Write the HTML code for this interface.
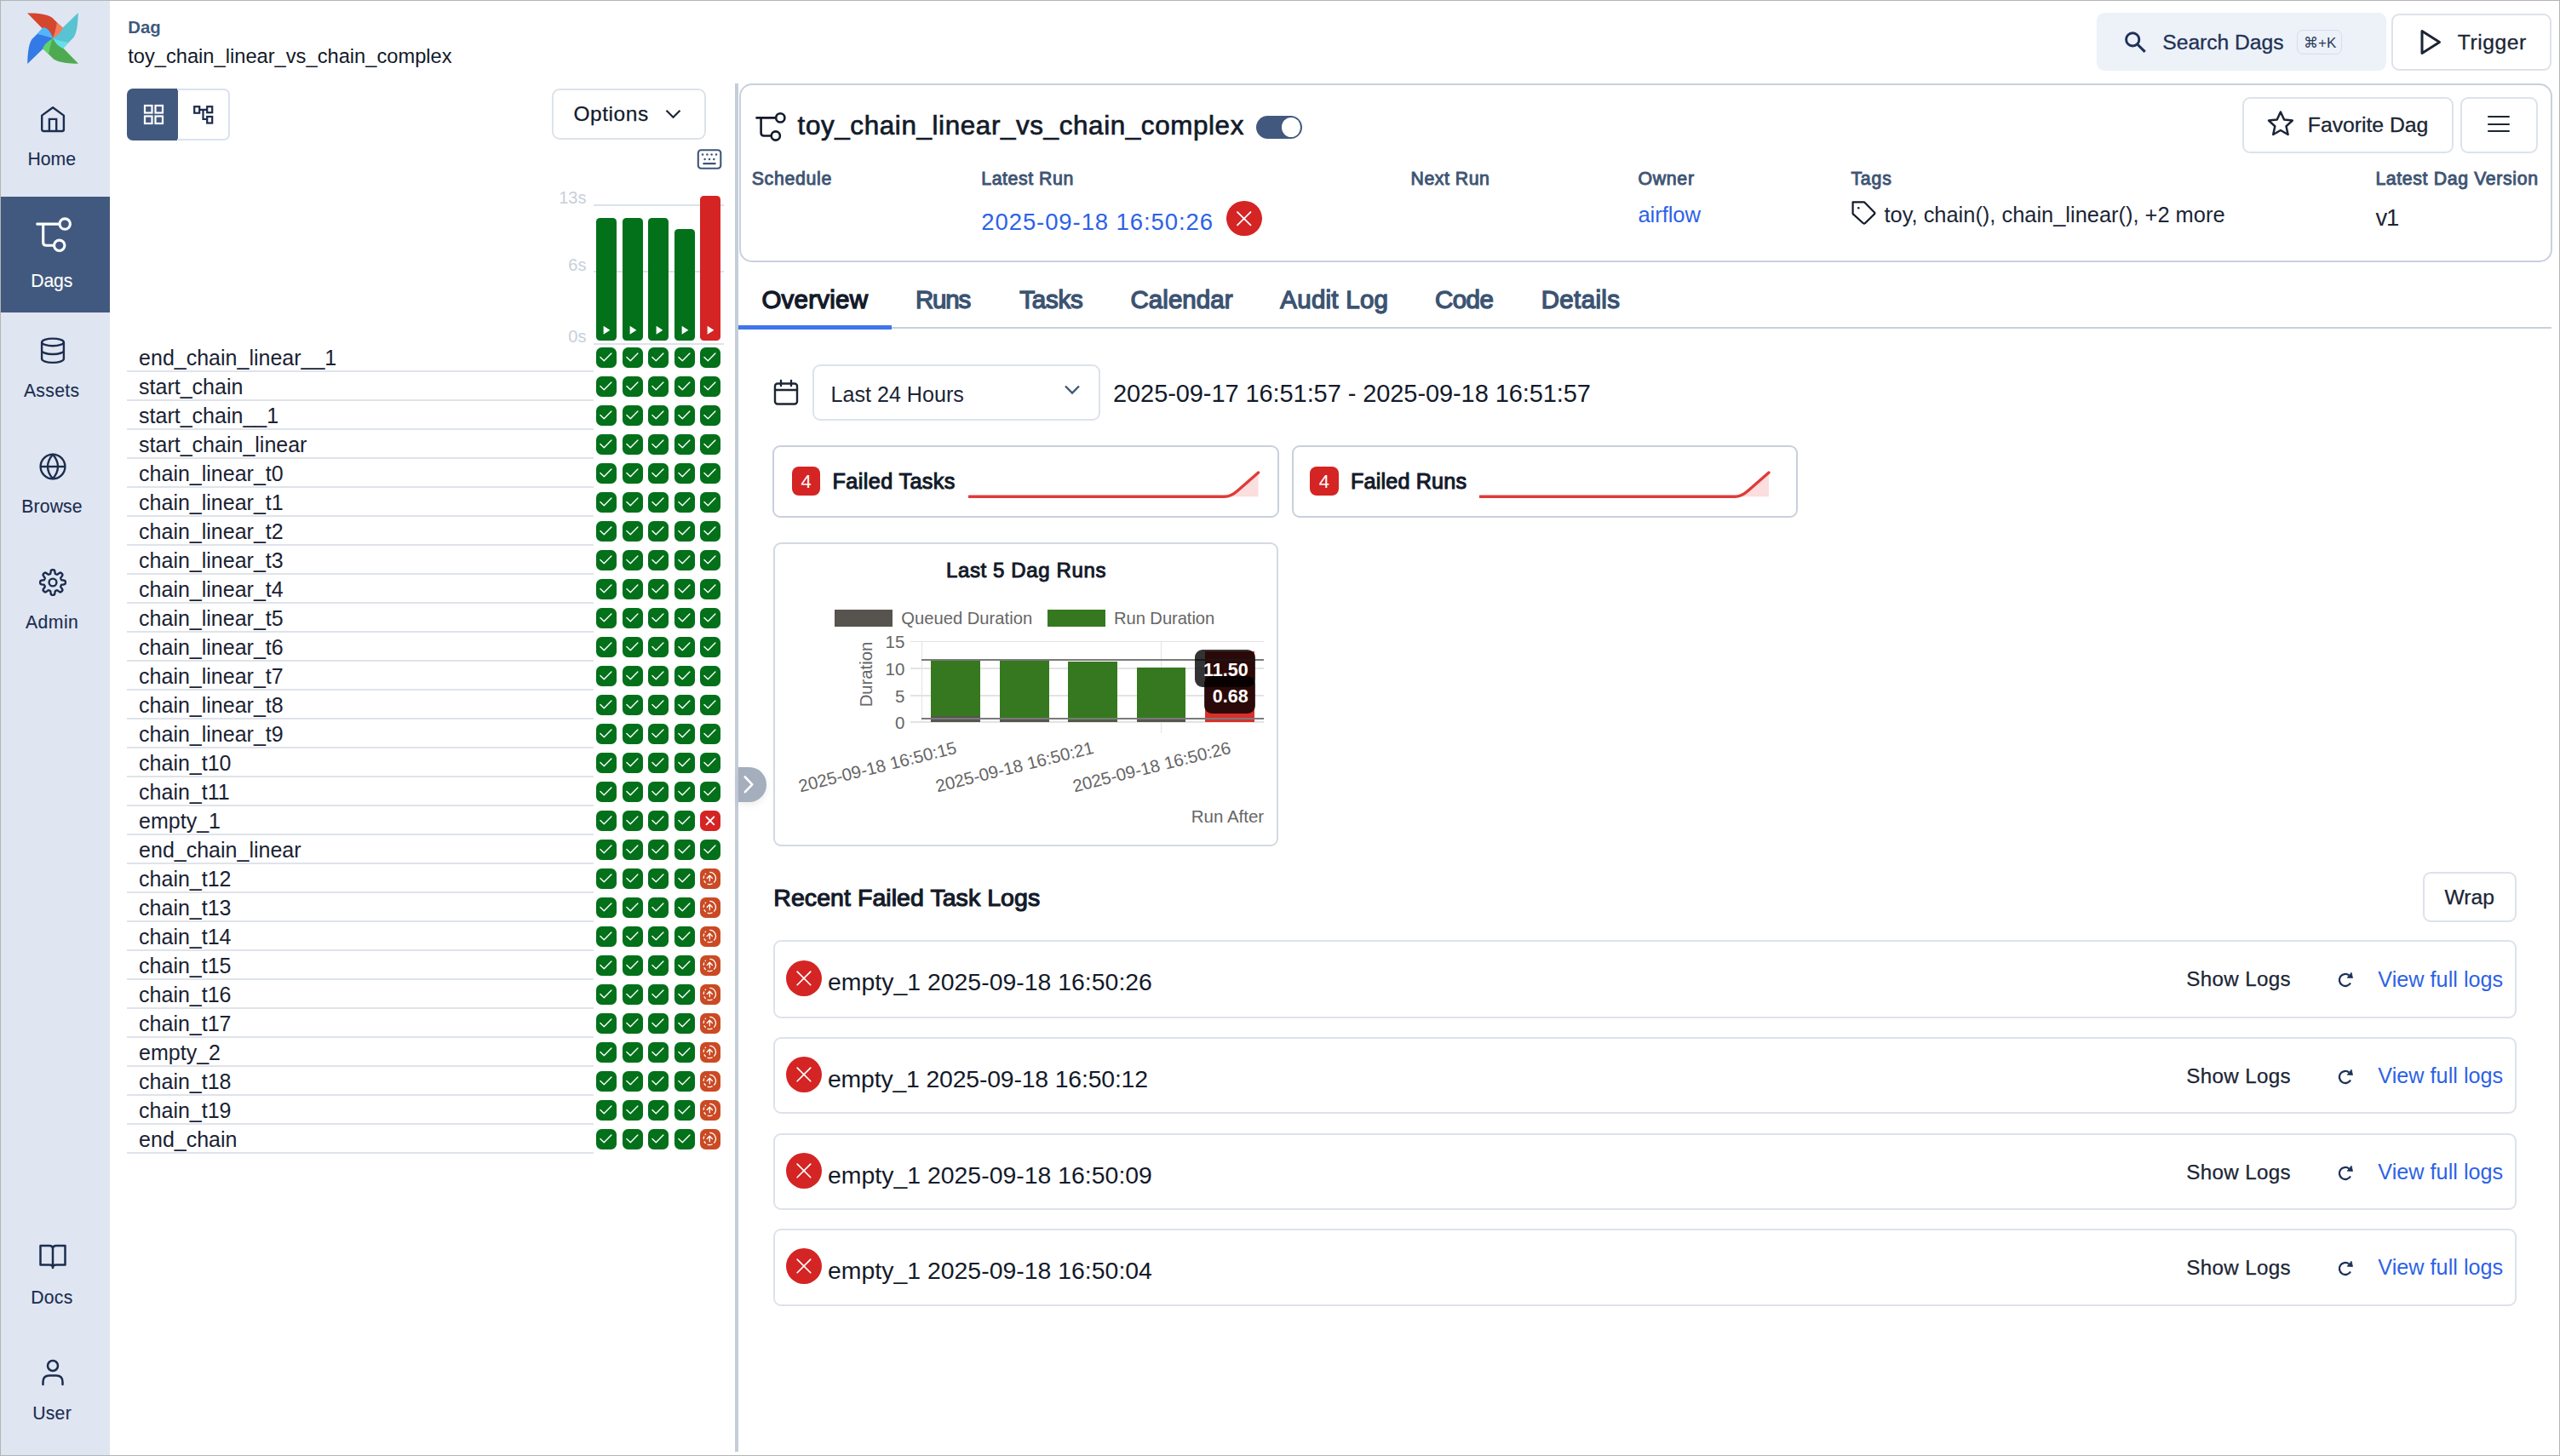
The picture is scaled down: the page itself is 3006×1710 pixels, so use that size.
<!DOCTYPE html>
<html><head><meta charset="utf-8"><style>
html,body{margin:0;padding:0;background:#fff;}
#root{position:relative;width:3006px;height:1710px;overflow:hidden;background:#ffffff;font-family:"Liberation Sans",sans-serif;}
.t{position:absolute;white-space:pre;font-family:"Liberation Sans",sans-serif;}
.b{position:absolute;}
</style></head><body><div id="root">
<div class="b" style="left:1.00px;top:1.00px;width:128.00px;height:1708.00px;background:#dfe6f2;"></div>
<svg class="b" style="left:31.50px;top:15.00px;width:60.00px;height:60.50px;" viewBox="0 0 60.0 60.5"><g transform="translate(30.0,30.0) rotate(0)"><path d="M0,0 C-3,-5 -6.5,-10 -13,-12.2 L-30,-29.8 C-20,-29.5 -8,-29 -1,-24.5 C2,-21.5 4,-19.5 5,-18.5 L12.6,-11.5 C13.2,-9.5 11,-6 8,-3.8 C5,-1.7 2,-0.3 0,0 Z" fill="#d4472d"/><path d="M0,0 C2,-0.3 5,-1.7 8,-3.8 C11,-6 13.2,-9.5 12.6,-11.5 L5,-18.5 C3.5,-12 2.5,-6 0,0 Z" fill="#f07f5f"/></g><g transform="translate(30.0,30.0) rotate(90)"><path d="M0,0 C-3,-5 -6.5,-10 -13,-12.2 L-30,-29.8 C-20,-29.5 -8,-29 -1,-24.5 C2,-21.5 4,-19.5 5,-18.5 L12.6,-11.5 C13.2,-9.5 11,-6 8,-3.8 C5,-1.7 2,-0.3 0,0 Z" fill="#58c3d1"/><path d="M0,0 C2,-0.3 5,-1.7 8,-3.8 C11,-6 13.2,-9.5 12.6,-11.5 L5,-18.5 C3.5,-12 2.5,-6 0,0 Z" fill="#66dfea"/></g><g transform="translate(30.0,30.0) rotate(180)"><path d="M0,0 C-3,-5 -6.5,-10 -13,-12.2 L-30,-29.8 C-20,-29.5 -8,-29 -1,-24.5 C2,-21.5 4,-19.5 5,-18.5 L12.6,-11.5 C13.2,-9.5 11,-6 8,-3.8 C5,-1.7 2,-0.3 0,0 Z" fill="#4eaa51"/><path d="M0,0 C2,-0.3 5,-1.7 8,-3.8 C11,-6 13.2,-9.5 12.6,-11.5 L5,-18.5 C3.5,-12 2.5,-6 0,0 Z" fill="#62d36b"/></g><g transform="translate(30.0,30.0) rotate(270)"><path d="M0,0 C-3,-5 -6.5,-10 -13,-12.2 L-30,-29.8 C-20,-29.5 -8,-29 -1,-24.5 C2,-21.5 4,-19.5 5,-18.5 L12.6,-11.5 C13.2,-9.5 11,-6 8,-3.8 C5,-1.7 2,-0.3 0,0 Z" fill="#347ae6"/><path d="M0,0 C2,-0.3 5,-1.7 8,-3.8 C11,-6 13.2,-9.5 12.6,-11.5 L5,-18.5 C3.5,-12 2.5,-6 0,0 Z" fill="#53b5f7"/></g></svg>
<svg class="b" style="left:44.00px;top:122.00px;width:36.00px;height:36.00px;" viewBox="0 0 36 36"><path d="M5.2,13.6 L18.05,4.3 L30.9,13.6 L30.9,30 Q30.9,32 28.9,32 L7.2,32 Q5.2,32 5.2,30 Z" fill="none" stroke="#1c2d4f" stroke-width="2.4" stroke-linejoin="round"/><path d="M13.9,32 L13.9,17.9 L22.2,17.9 L22.2,32" fill="none" stroke="#1c2d4f" stroke-width="2.4"/></svg>
<div id="t1" class="t" style="letter-spacing:0.023px;left:32.40px;top:176.38px;font-size:21.2px;line-height:21.2px;color:#1c2d4f;-webkit-text-stroke:0.12px #1c2d4f;">Home</div>
<div class="b" style="left:1.00px;top:231.00px;width:128.00px;height:136.00px;background:#42597f;"></div>
<svg class="b" style="left:41.00px;top:253.50px;width:44.00px;height:43.50px;" viewBox="0 0 44 43.5"><path d="M2.7,9.1 L28,9.1 M9.7,9.1 L9.7,30.8 Q9.7,34.3 13.2,34.3 L22.5,34.3" fill="none" stroke="#ffffff" stroke-width="3.1" stroke-linecap="round"/><circle cx="35.2" cy="9.1" r="6.2" fill="none" stroke="#ffffff" stroke-width="3.1"/><circle cx="28.7" cy="34.3" r="6.2" fill="none" stroke="#ffffff" stroke-width="3.1"/></svg>
<div id="t2" class="t" style="letter-spacing:-0.156px;left:36.30px;top:318.58px;font-size:21.2px;line-height:21.2px;color:#ffffff;-webkit-text-stroke:0.12px #ffffff;">Dags</div>
<svg class="b" style="left:44.00px;top:394.00px;width:36.00px;height:36.00px;" viewBox="0 0 36 36"><ellipse cx="18" cy="7.9" rx="12.9" ry="4.3" fill="none" stroke="#1c2d4f" stroke-width="2.4"/><path d="M5.1,7.9 L5.1,27.6 A12.9,4.3 0 0 0 30.9,27.6 L30.9,7.9 M5.1,17.7 A12.9,4.3 0 0 0 30.9,17.7" fill="none" stroke="#1c2d4f" stroke-width="2.4"/></svg>
<div id="t3" class="t" style="letter-spacing:0.341px;left:27.90px;top:448.08px;font-size:21.2px;line-height:21.2px;color:#1c2d4f;-webkit-text-stroke:0.12px #1c2d4f;">Assets</div>
<svg class="b" style="left:44.00px;top:530.00px;width:36.00px;height:36.00px;" viewBox="0 0 36 36"><circle cx="18" cy="18" r="14.4" fill="none" stroke="#1c2d4f" stroke-width="2.4"/><path d="M18,3.8 C22.5,9 24,14 24,18 C24,22 22.5,27 18,32.2 C13.5,27 12,22 12,18 C12,14 13.5,9 18,3.8 Z" fill="none" stroke="#1c2d4f" stroke-width="2.4" stroke-linejoin="round"/><path d="M3.6,18 L32.4,18" stroke="#1c2d4f" stroke-width="2.4"/></svg>
<div id="t4" class="t" style="letter-spacing:0.129px;left:25.30px;top:583.78px;font-size:21.2px;line-height:21.2px;color:#1c2d4f;-webkit-text-stroke:0.12px #1c2d4f;">Browse</div>
<svg class="b" style="left:44.00px;top:665.70px;width:36.00px;height:36.00px;" viewBox="0 0 36 36.0"><path d="M32.84,18.00 L32.82,18.58 L32.73,19.16 L32.48,19.71 L31.79,20.18 L30.36,20.46 L28.93,20.62 L28.22,20.88 L27.92,21.22 L27.73,21.59 L27.57,21.96 L27.42,22.34 L27.29,22.73 L27.27,23.19 L27.58,23.87 L28.48,25.00 L29.29,26.21 L29.45,27.03 L29.23,27.59 L28.89,28.07 L28.50,28.50 L28.07,28.89 L27.59,29.23 L27.03,29.45 L26.21,29.29 L25.00,28.48 L23.87,27.58 L23.19,27.27 L22.73,27.29 L22.34,27.42 L21.96,27.57 L21.59,27.73 L21.22,27.92 L20.88,28.22 L20.62,28.93 L20.46,30.36 L20.18,31.79 L19.71,32.48 L19.16,32.73 L18.58,32.82 L18.00,32.84 L17.42,32.82 L16.84,32.73 L16.29,32.48 L15.82,31.79 L15.54,30.36 L15.38,28.93 L15.12,28.22 L14.78,27.92 L14.41,27.73 L14.04,27.57 L13.66,27.42 L13.27,27.29 L12.81,27.27 L12.13,27.58 L11.00,28.48 L9.79,29.29 L8.97,29.45 L8.41,29.23 L7.93,28.89 L7.50,28.50 L7.11,28.07 L6.77,27.59 L6.55,27.03 L6.71,26.21 L7.52,25.00 L8.42,23.87 L8.73,23.19 L8.71,22.73 L8.58,22.34 L8.43,21.96 L8.27,21.59 L8.08,21.22 L7.78,20.88 L7.07,20.62 L5.64,20.46 L4.21,20.18 L3.52,19.71 L3.27,19.16 L3.18,18.58 L3.16,18.00 L3.18,17.42 L3.27,16.84 L3.52,16.29 L4.21,15.82 L5.64,15.54 L7.07,15.38 L7.78,15.12 L8.08,14.78 L8.27,14.41 L8.43,14.04 L8.58,13.66 L8.71,13.27 L8.73,12.81 L8.42,12.13 L7.52,11.00 L6.71,9.79 L6.55,8.97 L6.77,8.41 L7.11,7.93 L7.50,7.50 L7.93,7.11 L8.41,6.77 L8.97,6.55 L9.79,6.71 L11.00,7.52 L12.13,8.42 L12.81,8.73 L13.27,8.71 L13.66,8.58 L14.04,8.43 L14.41,8.27 L14.78,8.08 L15.12,7.78 L15.38,7.07 L15.54,5.64 L15.82,4.21 L16.29,3.52 L16.84,3.27 L17.42,3.18 L18.00,3.16 L18.58,3.18 L19.16,3.27 L19.71,3.52 L20.18,4.21 L20.46,5.64 L20.62,7.07 L20.88,7.78 L21.22,8.08 L21.59,8.27 L21.96,8.43 L22.34,8.58 L22.73,8.71 L23.19,8.73 L23.87,8.42 L25.00,7.52 L26.21,6.71 L27.03,6.55 L27.59,6.77 L28.07,7.11 L28.50,7.50 L28.89,7.93 L29.23,8.41 L29.45,8.97 L29.29,9.79 L28.48,11.00 L27.58,12.13 L27.27,12.81 L27.29,13.27 L27.42,13.66 L27.57,14.04 L27.73,14.41 L27.92,14.78 L28.22,15.12 L28.93,15.38 L30.36,15.54 L31.79,15.82 L32.48,16.29 L32.73,16.84 L32.82,17.42 Z" fill="none" stroke="#1c2d4f" stroke-width="2.4" stroke-linejoin="round"/><circle cx="18" cy="18" r="4.4" fill="none" stroke="#1c2d4f" stroke-width="2.4"/></svg>
<div id="t5" class="t" style="letter-spacing:0.459px;left:30.00px;top:719.98px;font-size:21.2px;line-height:21.2px;color:#1c2d4f;-webkit-text-stroke:0.12px #1c2d4f;">Admin</div>
<svg class="b" style="left:44.00px;top:1459.00px;width:36.00px;height:34.00px;" viewBox="0 0 36 34"><path d="M3.5,4 L14,4 Q18,4 18,8 L18,30 Q18,26.5 14,26.5 L3.5,26.5 Z M32.5,4 L22,4 Q18,4 18,8 L18,30 Q18,26.5 22,26.5 L32.5,26.5 Z" fill="none" stroke="#1c2d4f" stroke-width="2.5" stroke-linejoin="round"/></svg>
<div id="t6" class="t" style="letter-spacing:0.240px;left:36.30px;top:1513.18px;font-size:21.2px;line-height:21.2px;color:#1c2d4f;-webkit-text-stroke:0.12px #1c2d4f;">Docs</div>
<svg class="b" style="left:44.00px;top:1595.00px;width:36.00px;height:34.00px;" viewBox="0 0 36 34"><circle cx="18" cy="9" r="6" fill="none" stroke="#1c2d4f" stroke-width="2.5"/><path d="M6.5,31 L6.5,28 Q6.5,20.5 14,20.5 L22,20.5 Q29.5,20.5 29.5,28 L29.5,31" fill="none" stroke="#1c2d4f" stroke-width="2.5" stroke-linecap="round"/></svg>
<div id="t7" class="t" style="letter-spacing:0.255px;left:38.20px;top:1649.38px;font-size:21.2px;line-height:21.2px;color:#1c2d4f;-webkit-text-stroke:0.12px #1c2d4f;">User</div>
<div id="t8" class="t" style="letter-spacing:0.034px;left:150.20px;top:21.66px;font-size:20.4px;line-height:20.4px;color:#3f5a7e;font-weight:700;">Dag</div>
<div id="t9" class="t" style="letter-spacing:-0.005px;left:150.20px;top:54.61px;font-size:23.7px;line-height:23.7px;color:#131a2a;">toy_chain_linear_vs_chain_complex</div>
<div class="b" style="left:2462.30px;top:15.30px;width:339.40px;height:67.30px;background:#edf1f8;border-radius:9px;"></div>
<svg class="b" style="left:2493.00px;top:35.00px;width:29.00px;height:29.00px;" viewBox="0 0 29 29"><circle cx="11.2" cy="11.4" r="7.6" fill="none" stroke="#1e3257" stroke-width="2.9"/><path d="M16.8,17 L24.6,24.8" stroke="#1e3257" stroke-width="3.1" stroke-linecap="square"/></svg>
<div id="t10" class="t" style="letter-spacing:-0.052px;left:2539.30px;top:37.80px;font-size:24.7px;line-height:24.7px;color:#1e3257;-webkit-text-stroke:0.3px #1e3257;">Search Dags</div>
<div class="b" style="left:2697.30px;top:35.00px;width:52.70px;height:29.20px;border:1.5px solid #d5dded;border-radius:7px;box-sizing:border-box;"></div>
<div id="t11" class="t" style="left:2705.00px;top:41.55px;font-size:17px;line-height:17px;color:#2a3b5c;">⌘+K</div>
<div class="b" style="left:2808.00px;top:15.60px;width:188.00px;height:67.40px;border:2px solid #dde2ea;border-radius:9px;box-sizing:border-box;"></div>
<svg class="b" style="left:2840.00px;top:33.00px;width:28.00px;height:33.00px;" viewBox="0 0 28 33"><path d="M4,3.5 L24.5,16.5 L4,29.5 Z" fill="none" stroke="#1b2535" stroke-width="3" stroke-linejoin="round"/></svg>
<div id="t12" class="t" style="letter-spacing:0.536px;left:2885.80px;top:37.80px;font-size:24.7px;line-height:24.7px;color:#1b2535;-webkit-text-stroke:0.3px #1b2535;">Trigger</div>
<div class="b" style="left:149.10px;top:104.10px;width:59.90px;height:60.70px;background:#42597f;border-radius:7px 0 0 7px;"></div>
<div class="b" style="left:207.50px;top:104.10px;width:62.20px;height:60.70px;border:2px solid #d9e2f1;border-radius:0 7px 7px 0;box-sizing:border-box;border-left:none;"></div>
<svg class="b" style="left:167.00px;top:121.00px;width:27.00px;height:27.00px;" viewBox="0 0 27 27"><rect x="3" y="3" width="8.5" height="8.5" fill="none" stroke="#fff" stroke-width="2.2"/><rect x="3" y="15.5" width="8.5" height="8.5" fill="none" stroke="#fff" stroke-width="2.2"/><rect x="15.5" y="3" width="8.5" height="8.5" fill="none" stroke="#fff" stroke-width="2.2"/><rect x="15.5" y="15.5" width="8.5" height="8.5" fill="none" stroke="#fff" stroke-width="2.2"/></svg>
<svg class="b" style="left:225.00px;top:122.00px;width:27.00px;height:25.00px;" viewBox="0 0 27 25"><g fill="none" stroke="#1b2a4a" stroke-width="2.2"><rect x="3.2" y="3.2" width="6" height="7.5"/><rect x="18.2" y="3.2" width="6" height="7"/><rect x="18.2" y="15" width="6" height="7.5"/><path d="M9.2,6.8 L18.2,6.8 M13.5,6.8 L13.5,18 L18.2,18"/></g></svg>
<div class="b" style="left:647.60px;top:104.30px;width:181.00px;height:59.90px;border:2px solid #dde2ea;border-radius:9px;box-sizing:border-box;"></div>
<div id="t13" class="t" style="letter-spacing:0.544px;left:673.50px;top:122.27px;font-size:24.5px;line-height:24.5px;color:#131a2a;-webkit-text-stroke:0.25px #131a2a;">Options</div>
<svg class="b" style="left:780.00px;top:127.00px;width:21.00px;height:14.00px;" viewBox="0 0 21 14"><path d="M2.5,2.8 L10.5,10.8 L18.5,2.8" fill="none" stroke="#1b2535" stroke-width="2.2"/></svg>
<svg class="b" style="left:817.00px;top:173.00px;width:33.00px;height:28.00px;" viewBox="0 0 33 28"><rect x="2.8" y="3.2" width="26.5" height="21.5" rx="3.5" fill="none" stroke="#3d5577" stroke-width="2.1"/><circle cx="8" cy="8.5" r="1.25" fill="#3d5577"/><circle cx="13.4" cy="8.5" r="1.25" fill="#3d5577"/><circle cx="18.6" cy="8.5" r="1.25" fill="#3d5577"/><circle cx="24" cy="8.5" r="1.25" fill="#3d5577"/><circle cx="10.6" cy="13.9" r="1.25" fill="#3d5577"/><circle cx="16" cy="13.9" r="1.25" fill="#3d5577"/><circle cx="21.3" cy="13.9" r="1.25" fill="#3d5577"/><path d="M9.3,19.2 L22.7,19.2" stroke="#3d5577" stroke-width="2.2" stroke-linecap="round"/></svg>
<div id="t14" class="t" style="right:2317.60px;top:221.90px;font-size:20px;line-height:20px;color:#c7cfdb;">13s</div>
<div id="t15" class="t" style="right:2317.60px;top:300.50px;font-size:20px;line-height:20px;color:#c7cfdb;">6s</div>
<div id="t16" class="t" style="right:2317.60px;top:385.20px;font-size:20px;line-height:20px;color:#c7cfdb;">0s</div>
<div class="b" style="left:697.00px;top:240.00px;width:153.00px;height:2.00px;background:#dde2ea;"></div>
<div class="b" style="left:697.00px;top:318.00px;width:153.00px;height:2.00px;background:#dde2ea;"></div>
<div class="b" style="left:697.00px;top:403.00px;width:153.00px;height:2.00px;background:#dde2ea;"></div>
<div class="b" style="left:700.10px;top:255.90px;width:23.80px;height:143.70px;background:#03701a;border-radius:4.5px;"></div>
<svg class="b" style="left:708.30px;top:382.00px;width:8.80px;height:11.50px;" viewBox="0 0 8.799999999999955 11.5"><path d="M0.6,0.8 L8.4,5.75 L0.6,10.7 Z" fill="#fff"/></svg>
<div class="b" style="left:731.00px;top:255.90px;width:23.80px;height:143.70px;background:#03701a;border-radius:4.5px;"></div>
<svg class="b" style="left:739.20px;top:382.00px;width:8.80px;height:11.50px;" viewBox="0 0 8.799999999999955 11.5"><path d="M0.6,0.8 L8.4,5.75 L0.6,10.7 Z" fill="#fff"/></svg>
<div class="b" style="left:761.30px;top:255.90px;width:23.80px;height:143.70px;background:#03701a;border-radius:4.5px;"></div>
<svg class="b" style="left:769.50px;top:382.00px;width:8.80px;height:11.50px;" viewBox="0 0 8.799999999999955 11.5"><path d="M0.6,0.8 L8.4,5.75 L0.6,10.7 Z" fill="#fff"/></svg>
<div class="b" style="left:792.10px;top:269.00px;width:23.80px;height:130.60px;background:#03701a;border-radius:4.5px;"></div>
<svg class="b" style="left:800.30px;top:382.00px;width:8.80px;height:11.50px;" viewBox="0 0 8.799999999999955 11.5"><path d="M0.6,0.8 L8.4,5.75 L0.6,10.7 Z" fill="#fff"/></svg>
<div class="b" style="left:822.20px;top:230.00px;width:23.80px;height:169.60px;background:#d42424;border-radius:4.5px;"></div>
<svg class="b" style="left:830.40px;top:382.00px;width:8.80px;height:11.50px;" viewBox="0 0 8.799999999999955 11.5"><path d="M0.6,0.8 L8.4,5.75 L0.6,10.7 Z" fill="#fff"/></svg>
<div id="t17" class="t" style="left:163.10px;top:408.35px;font-size:25px;line-height:25px;color:#1a2233;">end_chain_linear__1</div>
<div class="b" style="left:149.20px;top:435.00px;width:547.60px;height:2.00px;background:#dfe3ea;"></div>
<div class="b" style="left:700.10px;top:408.10px;width:23.70px;height:23.80px;background:#03701a;border-radius:6.5px;"></div>
<svg class="b" style="left:700.10px;top:408.10px;width:23.80px;height:23.80px;" viewBox="0 0 23.8 23.8"><path d="M4.9,11.4 L9.3,15.8 L17.9,6.9" fill="none" stroke="#fff" stroke-width="1.4" stroke-linecap="round" stroke-linejoin="round"/></svg>
<div class="b" style="left:731.00px;top:408.10px;width:23.70px;height:23.80px;background:#03701a;border-radius:6.5px;"></div>
<svg class="b" style="left:731.00px;top:408.10px;width:23.80px;height:23.80px;" viewBox="0 0 23.8 23.8"><path d="M4.9,11.4 L9.3,15.8 L17.9,6.9" fill="none" stroke="#fff" stroke-width="1.4" stroke-linecap="round" stroke-linejoin="round"/></svg>
<div class="b" style="left:761.30px;top:408.10px;width:23.70px;height:23.80px;background:#03701a;border-radius:6.5px;"></div>
<svg class="b" style="left:761.30px;top:408.10px;width:23.80px;height:23.80px;" viewBox="0 0 23.8 23.8"><path d="M4.9,11.4 L9.3,15.8 L17.9,6.9" fill="none" stroke="#fff" stroke-width="1.4" stroke-linecap="round" stroke-linejoin="round"/></svg>
<div class="b" style="left:792.10px;top:408.10px;width:23.70px;height:23.80px;background:#03701a;border-radius:6.5px;"></div>
<svg class="b" style="left:792.10px;top:408.10px;width:23.80px;height:23.80px;" viewBox="0 0 23.8 23.8"><path d="M4.9,11.4 L9.3,15.8 L17.9,6.9" fill="none" stroke="#fff" stroke-width="1.4" stroke-linecap="round" stroke-linejoin="round"/></svg>
<div class="b" style="left:822.20px;top:408.10px;width:23.70px;height:23.80px;background:#03701a;border-radius:6.5px;"></div>
<svg class="b" style="left:822.20px;top:408.10px;width:23.80px;height:23.80px;" viewBox="0 0 23.8 23.8"><path d="M4.9,11.4 L9.3,15.8 L17.9,6.9" fill="none" stroke="#fff" stroke-width="1.4" stroke-linecap="round" stroke-linejoin="round"/></svg>
<div id="t18" class="t" style="left:163.10px;top:442.35px;font-size:25px;line-height:25px;color:#1a2233;">start_chain</div>
<div class="b" style="left:149.20px;top:469.00px;width:547.60px;height:2.00px;background:#dfe3ea;"></div>
<div class="b" style="left:700.10px;top:442.10px;width:23.70px;height:23.80px;background:#03701a;border-radius:6.5px;"></div>
<svg class="b" style="left:700.10px;top:442.10px;width:23.80px;height:23.80px;" viewBox="0 0 23.8 23.8"><path d="M4.9,11.4 L9.3,15.8 L17.9,6.9" fill="none" stroke="#fff" stroke-width="1.4" stroke-linecap="round" stroke-linejoin="round"/></svg>
<div class="b" style="left:731.00px;top:442.10px;width:23.70px;height:23.80px;background:#03701a;border-radius:6.5px;"></div>
<svg class="b" style="left:731.00px;top:442.10px;width:23.80px;height:23.80px;" viewBox="0 0 23.8 23.8"><path d="M4.9,11.4 L9.3,15.8 L17.9,6.9" fill="none" stroke="#fff" stroke-width="1.4" stroke-linecap="round" stroke-linejoin="round"/></svg>
<div class="b" style="left:761.30px;top:442.10px;width:23.70px;height:23.80px;background:#03701a;border-radius:6.5px;"></div>
<svg class="b" style="left:761.30px;top:442.10px;width:23.80px;height:23.80px;" viewBox="0 0 23.8 23.8"><path d="M4.9,11.4 L9.3,15.8 L17.9,6.9" fill="none" stroke="#fff" stroke-width="1.4" stroke-linecap="round" stroke-linejoin="round"/></svg>
<div class="b" style="left:792.10px;top:442.10px;width:23.70px;height:23.80px;background:#03701a;border-radius:6.5px;"></div>
<svg class="b" style="left:792.10px;top:442.10px;width:23.80px;height:23.80px;" viewBox="0 0 23.8 23.8"><path d="M4.9,11.4 L9.3,15.8 L17.9,6.9" fill="none" stroke="#fff" stroke-width="1.4" stroke-linecap="round" stroke-linejoin="round"/></svg>
<div class="b" style="left:822.20px;top:442.10px;width:23.70px;height:23.80px;background:#03701a;border-radius:6.5px;"></div>
<svg class="b" style="left:822.20px;top:442.10px;width:23.80px;height:23.80px;" viewBox="0 0 23.8 23.8"><path d="M4.9,11.4 L9.3,15.8 L17.9,6.9" fill="none" stroke="#fff" stroke-width="1.4" stroke-linecap="round" stroke-linejoin="round"/></svg>
<div id="t19" class="t" style="left:163.10px;top:476.35px;font-size:25px;line-height:25px;color:#1a2233;">start_chain__1</div>
<div class="b" style="left:149.20px;top:503.00px;width:547.60px;height:2.00px;background:#dfe3ea;"></div>
<div class="b" style="left:700.10px;top:476.10px;width:23.70px;height:23.80px;background:#03701a;border-radius:6.5px;"></div>
<svg class="b" style="left:700.10px;top:476.10px;width:23.80px;height:23.80px;" viewBox="0 0 23.8 23.8"><path d="M4.9,11.4 L9.3,15.8 L17.9,6.9" fill="none" stroke="#fff" stroke-width="1.4" stroke-linecap="round" stroke-linejoin="round"/></svg>
<div class="b" style="left:731.00px;top:476.10px;width:23.70px;height:23.80px;background:#03701a;border-radius:6.5px;"></div>
<svg class="b" style="left:731.00px;top:476.10px;width:23.80px;height:23.80px;" viewBox="0 0 23.8 23.8"><path d="M4.9,11.4 L9.3,15.8 L17.9,6.9" fill="none" stroke="#fff" stroke-width="1.4" stroke-linecap="round" stroke-linejoin="round"/></svg>
<div class="b" style="left:761.30px;top:476.10px;width:23.70px;height:23.80px;background:#03701a;border-radius:6.5px;"></div>
<svg class="b" style="left:761.30px;top:476.10px;width:23.80px;height:23.80px;" viewBox="0 0 23.8 23.8"><path d="M4.9,11.4 L9.3,15.8 L17.9,6.9" fill="none" stroke="#fff" stroke-width="1.4" stroke-linecap="round" stroke-linejoin="round"/></svg>
<div class="b" style="left:792.10px;top:476.10px;width:23.70px;height:23.80px;background:#03701a;border-radius:6.5px;"></div>
<svg class="b" style="left:792.10px;top:476.10px;width:23.80px;height:23.80px;" viewBox="0 0 23.8 23.8"><path d="M4.9,11.4 L9.3,15.8 L17.9,6.9" fill="none" stroke="#fff" stroke-width="1.4" stroke-linecap="round" stroke-linejoin="round"/></svg>
<div class="b" style="left:822.20px;top:476.10px;width:23.70px;height:23.80px;background:#03701a;border-radius:6.5px;"></div>
<svg class="b" style="left:822.20px;top:476.10px;width:23.80px;height:23.80px;" viewBox="0 0 23.8 23.8"><path d="M4.9,11.4 L9.3,15.8 L17.9,6.9" fill="none" stroke="#fff" stroke-width="1.4" stroke-linecap="round" stroke-linejoin="round"/></svg>
<div id="t20" class="t" style="left:163.10px;top:510.35px;font-size:25px;line-height:25px;color:#1a2233;">start_chain_linear</div>
<div class="b" style="left:149.20px;top:537.00px;width:547.60px;height:2.00px;background:#dfe3ea;"></div>
<div class="b" style="left:700.10px;top:510.10px;width:23.70px;height:23.80px;background:#03701a;border-radius:6.5px;"></div>
<svg class="b" style="left:700.10px;top:510.10px;width:23.80px;height:23.80px;" viewBox="0 0 23.8 23.8"><path d="M4.9,11.4 L9.3,15.8 L17.9,6.9" fill="none" stroke="#fff" stroke-width="1.4" stroke-linecap="round" stroke-linejoin="round"/></svg>
<div class="b" style="left:731.00px;top:510.10px;width:23.70px;height:23.80px;background:#03701a;border-radius:6.5px;"></div>
<svg class="b" style="left:731.00px;top:510.10px;width:23.80px;height:23.80px;" viewBox="0 0 23.8 23.8"><path d="M4.9,11.4 L9.3,15.8 L17.9,6.9" fill="none" stroke="#fff" stroke-width="1.4" stroke-linecap="round" stroke-linejoin="round"/></svg>
<div class="b" style="left:761.30px;top:510.10px;width:23.70px;height:23.80px;background:#03701a;border-radius:6.5px;"></div>
<svg class="b" style="left:761.30px;top:510.10px;width:23.80px;height:23.80px;" viewBox="0 0 23.8 23.8"><path d="M4.9,11.4 L9.3,15.8 L17.9,6.9" fill="none" stroke="#fff" stroke-width="1.4" stroke-linecap="round" stroke-linejoin="round"/></svg>
<div class="b" style="left:792.10px;top:510.10px;width:23.70px;height:23.80px;background:#03701a;border-radius:6.5px;"></div>
<svg class="b" style="left:792.10px;top:510.10px;width:23.80px;height:23.80px;" viewBox="0 0 23.8 23.8"><path d="M4.9,11.4 L9.3,15.8 L17.9,6.9" fill="none" stroke="#fff" stroke-width="1.4" stroke-linecap="round" stroke-linejoin="round"/></svg>
<div class="b" style="left:822.20px;top:510.10px;width:23.70px;height:23.80px;background:#03701a;border-radius:6.5px;"></div>
<svg class="b" style="left:822.20px;top:510.10px;width:23.80px;height:23.80px;" viewBox="0 0 23.8 23.8"><path d="M4.9,11.4 L9.3,15.8 L17.9,6.9" fill="none" stroke="#fff" stroke-width="1.4" stroke-linecap="round" stroke-linejoin="round"/></svg>
<div id="t21" class="t" style="left:163.10px;top:544.35px;font-size:25px;line-height:25px;color:#1a2233;">chain_linear_t0</div>
<div class="b" style="left:149.20px;top:571.00px;width:547.60px;height:2.00px;background:#dfe3ea;"></div>
<div class="b" style="left:700.10px;top:544.10px;width:23.70px;height:23.80px;background:#03701a;border-radius:6.5px;"></div>
<svg class="b" style="left:700.10px;top:544.10px;width:23.80px;height:23.80px;" viewBox="0 0 23.8 23.8"><path d="M4.9,11.4 L9.3,15.8 L17.9,6.9" fill="none" stroke="#fff" stroke-width="1.4" stroke-linecap="round" stroke-linejoin="round"/></svg>
<div class="b" style="left:731.00px;top:544.10px;width:23.70px;height:23.80px;background:#03701a;border-radius:6.5px;"></div>
<svg class="b" style="left:731.00px;top:544.10px;width:23.80px;height:23.80px;" viewBox="0 0 23.8 23.8"><path d="M4.9,11.4 L9.3,15.8 L17.9,6.9" fill="none" stroke="#fff" stroke-width="1.4" stroke-linecap="round" stroke-linejoin="round"/></svg>
<div class="b" style="left:761.30px;top:544.10px;width:23.70px;height:23.80px;background:#03701a;border-radius:6.5px;"></div>
<svg class="b" style="left:761.30px;top:544.10px;width:23.80px;height:23.80px;" viewBox="0 0 23.8 23.8"><path d="M4.9,11.4 L9.3,15.8 L17.9,6.9" fill="none" stroke="#fff" stroke-width="1.4" stroke-linecap="round" stroke-linejoin="round"/></svg>
<div class="b" style="left:792.10px;top:544.10px;width:23.70px;height:23.80px;background:#03701a;border-radius:6.5px;"></div>
<svg class="b" style="left:792.10px;top:544.10px;width:23.80px;height:23.80px;" viewBox="0 0 23.8 23.8"><path d="M4.9,11.4 L9.3,15.8 L17.9,6.9" fill="none" stroke="#fff" stroke-width="1.4" stroke-linecap="round" stroke-linejoin="round"/></svg>
<div class="b" style="left:822.20px;top:544.10px;width:23.70px;height:23.80px;background:#03701a;border-radius:6.5px;"></div>
<svg class="b" style="left:822.20px;top:544.10px;width:23.80px;height:23.80px;" viewBox="0 0 23.8 23.8"><path d="M4.9,11.4 L9.3,15.8 L17.9,6.9" fill="none" stroke="#fff" stroke-width="1.4" stroke-linecap="round" stroke-linejoin="round"/></svg>
<div id="t22" class="t" style="left:163.10px;top:578.35px;font-size:25px;line-height:25px;color:#1a2233;">chain_linear_t1</div>
<div class="b" style="left:149.20px;top:605.00px;width:547.60px;height:2.00px;background:#dfe3ea;"></div>
<div class="b" style="left:700.10px;top:578.10px;width:23.70px;height:23.80px;background:#03701a;border-radius:6.5px;"></div>
<svg class="b" style="left:700.10px;top:578.10px;width:23.80px;height:23.80px;" viewBox="0 0 23.8 23.8"><path d="M4.9,11.4 L9.3,15.8 L17.9,6.9" fill="none" stroke="#fff" stroke-width="1.4" stroke-linecap="round" stroke-linejoin="round"/></svg>
<div class="b" style="left:731.00px;top:578.10px;width:23.70px;height:23.80px;background:#03701a;border-radius:6.5px;"></div>
<svg class="b" style="left:731.00px;top:578.10px;width:23.80px;height:23.80px;" viewBox="0 0 23.8 23.8"><path d="M4.9,11.4 L9.3,15.8 L17.9,6.9" fill="none" stroke="#fff" stroke-width="1.4" stroke-linecap="round" stroke-linejoin="round"/></svg>
<div class="b" style="left:761.30px;top:578.10px;width:23.70px;height:23.80px;background:#03701a;border-radius:6.5px;"></div>
<svg class="b" style="left:761.30px;top:578.10px;width:23.80px;height:23.80px;" viewBox="0 0 23.8 23.8"><path d="M4.9,11.4 L9.3,15.8 L17.9,6.9" fill="none" stroke="#fff" stroke-width="1.4" stroke-linecap="round" stroke-linejoin="round"/></svg>
<div class="b" style="left:792.10px;top:578.10px;width:23.70px;height:23.80px;background:#03701a;border-radius:6.5px;"></div>
<svg class="b" style="left:792.10px;top:578.10px;width:23.80px;height:23.80px;" viewBox="0 0 23.8 23.8"><path d="M4.9,11.4 L9.3,15.8 L17.9,6.9" fill="none" stroke="#fff" stroke-width="1.4" stroke-linecap="round" stroke-linejoin="round"/></svg>
<div class="b" style="left:822.20px;top:578.10px;width:23.70px;height:23.80px;background:#03701a;border-radius:6.5px;"></div>
<svg class="b" style="left:822.20px;top:578.10px;width:23.80px;height:23.80px;" viewBox="0 0 23.8 23.8"><path d="M4.9,11.4 L9.3,15.8 L17.9,6.9" fill="none" stroke="#fff" stroke-width="1.4" stroke-linecap="round" stroke-linejoin="round"/></svg>
<div id="t23" class="t" style="left:163.10px;top:612.35px;font-size:25px;line-height:25px;color:#1a2233;">chain_linear_t2</div>
<div class="b" style="left:149.20px;top:639.00px;width:547.60px;height:2.00px;background:#dfe3ea;"></div>
<div class="b" style="left:700.10px;top:612.10px;width:23.70px;height:23.80px;background:#03701a;border-radius:6.5px;"></div>
<svg class="b" style="left:700.10px;top:612.10px;width:23.80px;height:23.80px;" viewBox="0 0 23.8 23.8"><path d="M4.9,11.4 L9.3,15.8 L17.9,6.9" fill="none" stroke="#fff" stroke-width="1.4" stroke-linecap="round" stroke-linejoin="round"/></svg>
<div class="b" style="left:731.00px;top:612.10px;width:23.70px;height:23.80px;background:#03701a;border-radius:6.5px;"></div>
<svg class="b" style="left:731.00px;top:612.10px;width:23.80px;height:23.80px;" viewBox="0 0 23.8 23.8"><path d="M4.9,11.4 L9.3,15.8 L17.9,6.9" fill="none" stroke="#fff" stroke-width="1.4" stroke-linecap="round" stroke-linejoin="round"/></svg>
<div class="b" style="left:761.30px;top:612.10px;width:23.70px;height:23.80px;background:#03701a;border-radius:6.5px;"></div>
<svg class="b" style="left:761.30px;top:612.10px;width:23.80px;height:23.80px;" viewBox="0 0 23.8 23.8"><path d="M4.9,11.4 L9.3,15.8 L17.9,6.9" fill="none" stroke="#fff" stroke-width="1.4" stroke-linecap="round" stroke-linejoin="round"/></svg>
<div class="b" style="left:792.10px;top:612.10px;width:23.70px;height:23.80px;background:#03701a;border-radius:6.5px;"></div>
<svg class="b" style="left:792.10px;top:612.10px;width:23.80px;height:23.80px;" viewBox="0 0 23.8 23.8"><path d="M4.9,11.4 L9.3,15.8 L17.9,6.9" fill="none" stroke="#fff" stroke-width="1.4" stroke-linecap="round" stroke-linejoin="round"/></svg>
<div class="b" style="left:822.20px;top:612.10px;width:23.70px;height:23.80px;background:#03701a;border-radius:6.5px;"></div>
<svg class="b" style="left:822.20px;top:612.10px;width:23.80px;height:23.80px;" viewBox="0 0 23.8 23.8"><path d="M4.9,11.4 L9.3,15.8 L17.9,6.9" fill="none" stroke="#fff" stroke-width="1.4" stroke-linecap="round" stroke-linejoin="round"/></svg>
<div id="t24" class="t" style="left:163.10px;top:646.35px;font-size:25px;line-height:25px;color:#1a2233;">chain_linear_t3</div>
<div class="b" style="left:149.20px;top:673.00px;width:547.60px;height:2.00px;background:#dfe3ea;"></div>
<div class="b" style="left:700.10px;top:646.10px;width:23.70px;height:23.80px;background:#03701a;border-radius:6.5px;"></div>
<svg class="b" style="left:700.10px;top:646.10px;width:23.80px;height:23.80px;" viewBox="0 0 23.8 23.8"><path d="M4.9,11.4 L9.3,15.8 L17.9,6.9" fill="none" stroke="#fff" stroke-width="1.4" stroke-linecap="round" stroke-linejoin="round"/></svg>
<div class="b" style="left:731.00px;top:646.10px;width:23.70px;height:23.80px;background:#03701a;border-radius:6.5px;"></div>
<svg class="b" style="left:731.00px;top:646.10px;width:23.80px;height:23.80px;" viewBox="0 0 23.8 23.8"><path d="M4.9,11.4 L9.3,15.8 L17.9,6.9" fill="none" stroke="#fff" stroke-width="1.4" stroke-linecap="round" stroke-linejoin="round"/></svg>
<div class="b" style="left:761.30px;top:646.10px;width:23.70px;height:23.80px;background:#03701a;border-radius:6.5px;"></div>
<svg class="b" style="left:761.30px;top:646.10px;width:23.80px;height:23.80px;" viewBox="0 0 23.8 23.8"><path d="M4.9,11.4 L9.3,15.8 L17.9,6.9" fill="none" stroke="#fff" stroke-width="1.4" stroke-linecap="round" stroke-linejoin="round"/></svg>
<div class="b" style="left:792.10px;top:646.10px;width:23.70px;height:23.80px;background:#03701a;border-radius:6.5px;"></div>
<svg class="b" style="left:792.10px;top:646.10px;width:23.80px;height:23.80px;" viewBox="0 0 23.8 23.8"><path d="M4.9,11.4 L9.3,15.8 L17.9,6.9" fill="none" stroke="#fff" stroke-width="1.4" stroke-linecap="round" stroke-linejoin="round"/></svg>
<div class="b" style="left:822.20px;top:646.10px;width:23.70px;height:23.80px;background:#03701a;border-radius:6.5px;"></div>
<svg class="b" style="left:822.20px;top:646.10px;width:23.80px;height:23.80px;" viewBox="0 0 23.8 23.8"><path d="M4.9,11.4 L9.3,15.8 L17.9,6.9" fill="none" stroke="#fff" stroke-width="1.4" stroke-linecap="round" stroke-linejoin="round"/></svg>
<div id="t25" class="t" style="left:163.10px;top:680.35px;font-size:25px;line-height:25px;color:#1a2233;">chain_linear_t4</div>
<div class="b" style="left:149.20px;top:707.00px;width:547.60px;height:2.00px;background:#dfe3ea;"></div>
<div class="b" style="left:700.10px;top:680.10px;width:23.70px;height:23.80px;background:#03701a;border-radius:6.5px;"></div>
<svg class="b" style="left:700.10px;top:680.10px;width:23.80px;height:23.80px;" viewBox="0 0 23.8 23.8"><path d="M4.9,11.4 L9.3,15.8 L17.9,6.9" fill="none" stroke="#fff" stroke-width="1.4" stroke-linecap="round" stroke-linejoin="round"/></svg>
<div class="b" style="left:731.00px;top:680.10px;width:23.70px;height:23.80px;background:#03701a;border-radius:6.5px;"></div>
<svg class="b" style="left:731.00px;top:680.10px;width:23.80px;height:23.80px;" viewBox="0 0 23.8 23.8"><path d="M4.9,11.4 L9.3,15.8 L17.9,6.9" fill="none" stroke="#fff" stroke-width="1.4" stroke-linecap="round" stroke-linejoin="round"/></svg>
<div class="b" style="left:761.30px;top:680.10px;width:23.70px;height:23.80px;background:#03701a;border-radius:6.5px;"></div>
<svg class="b" style="left:761.30px;top:680.10px;width:23.80px;height:23.80px;" viewBox="0 0 23.8 23.8"><path d="M4.9,11.4 L9.3,15.8 L17.9,6.9" fill="none" stroke="#fff" stroke-width="1.4" stroke-linecap="round" stroke-linejoin="round"/></svg>
<div class="b" style="left:792.10px;top:680.10px;width:23.70px;height:23.80px;background:#03701a;border-radius:6.5px;"></div>
<svg class="b" style="left:792.10px;top:680.10px;width:23.80px;height:23.80px;" viewBox="0 0 23.8 23.8"><path d="M4.9,11.4 L9.3,15.8 L17.9,6.9" fill="none" stroke="#fff" stroke-width="1.4" stroke-linecap="round" stroke-linejoin="round"/></svg>
<div class="b" style="left:822.20px;top:680.10px;width:23.70px;height:23.80px;background:#03701a;border-radius:6.5px;"></div>
<svg class="b" style="left:822.20px;top:680.10px;width:23.80px;height:23.80px;" viewBox="0 0 23.8 23.8"><path d="M4.9,11.4 L9.3,15.8 L17.9,6.9" fill="none" stroke="#fff" stroke-width="1.4" stroke-linecap="round" stroke-linejoin="round"/></svg>
<div id="t26" class="t" style="left:163.10px;top:714.35px;font-size:25px;line-height:25px;color:#1a2233;">chain_linear_t5</div>
<div class="b" style="left:149.20px;top:741.00px;width:547.60px;height:2.00px;background:#dfe3ea;"></div>
<div class="b" style="left:700.10px;top:714.10px;width:23.70px;height:23.80px;background:#03701a;border-radius:6.5px;"></div>
<svg class="b" style="left:700.10px;top:714.10px;width:23.80px;height:23.80px;" viewBox="0 0 23.8 23.8"><path d="M4.9,11.4 L9.3,15.8 L17.9,6.9" fill="none" stroke="#fff" stroke-width="1.4" stroke-linecap="round" stroke-linejoin="round"/></svg>
<div class="b" style="left:731.00px;top:714.10px;width:23.70px;height:23.80px;background:#03701a;border-radius:6.5px;"></div>
<svg class="b" style="left:731.00px;top:714.10px;width:23.80px;height:23.80px;" viewBox="0 0 23.8 23.8"><path d="M4.9,11.4 L9.3,15.8 L17.9,6.9" fill="none" stroke="#fff" stroke-width="1.4" stroke-linecap="round" stroke-linejoin="round"/></svg>
<div class="b" style="left:761.30px;top:714.10px;width:23.70px;height:23.80px;background:#03701a;border-radius:6.5px;"></div>
<svg class="b" style="left:761.30px;top:714.10px;width:23.80px;height:23.80px;" viewBox="0 0 23.8 23.8"><path d="M4.9,11.4 L9.3,15.8 L17.9,6.9" fill="none" stroke="#fff" stroke-width="1.4" stroke-linecap="round" stroke-linejoin="round"/></svg>
<div class="b" style="left:792.10px;top:714.10px;width:23.70px;height:23.80px;background:#03701a;border-radius:6.5px;"></div>
<svg class="b" style="left:792.10px;top:714.10px;width:23.80px;height:23.80px;" viewBox="0 0 23.8 23.8"><path d="M4.9,11.4 L9.3,15.8 L17.9,6.9" fill="none" stroke="#fff" stroke-width="1.4" stroke-linecap="round" stroke-linejoin="round"/></svg>
<div class="b" style="left:822.20px;top:714.10px;width:23.70px;height:23.80px;background:#03701a;border-radius:6.5px;"></div>
<svg class="b" style="left:822.20px;top:714.10px;width:23.80px;height:23.80px;" viewBox="0 0 23.8 23.8"><path d="M4.9,11.4 L9.3,15.8 L17.9,6.9" fill="none" stroke="#fff" stroke-width="1.4" stroke-linecap="round" stroke-linejoin="round"/></svg>
<div id="t27" class="t" style="left:163.10px;top:748.35px;font-size:25px;line-height:25px;color:#1a2233;">chain_linear_t6</div>
<div class="b" style="left:149.20px;top:775.00px;width:547.60px;height:2.00px;background:#dfe3ea;"></div>
<div class="b" style="left:700.10px;top:748.10px;width:23.70px;height:23.80px;background:#03701a;border-radius:6.5px;"></div>
<svg class="b" style="left:700.10px;top:748.10px;width:23.80px;height:23.80px;" viewBox="0 0 23.8 23.8"><path d="M4.9,11.4 L9.3,15.8 L17.9,6.9" fill="none" stroke="#fff" stroke-width="1.4" stroke-linecap="round" stroke-linejoin="round"/></svg>
<div class="b" style="left:731.00px;top:748.10px;width:23.70px;height:23.80px;background:#03701a;border-radius:6.5px;"></div>
<svg class="b" style="left:731.00px;top:748.10px;width:23.80px;height:23.80px;" viewBox="0 0 23.8 23.8"><path d="M4.9,11.4 L9.3,15.8 L17.9,6.9" fill="none" stroke="#fff" stroke-width="1.4" stroke-linecap="round" stroke-linejoin="round"/></svg>
<div class="b" style="left:761.30px;top:748.10px;width:23.70px;height:23.80px;background:#03701a;border-radius:6.5px;"></div>
<svg class="b" style="left:761.30px;top:748.10px;width:23.80px;height:23.80px;" viewBox="0 0 23.8 23.8"><path d="M4.9,11.4 L9.3,15.8 L17.9,6.9" fill="none" stroke="#fff" stroke-width="1.4" stroke-linecap="round" stroke-linejoin="round"/></svg>
<div class="b" style="left:792.10px;top:748.10px;width:23.70px;height:23.80px;background:#03701a;border-radius:6.5px;"></div>
<svg class="b" style="left:792.10px;top:748.10px;width:23.80px;height:23.80px;" viewBox="0 0 23.8 23.8"><path d="M4.9,11.4 L9.3,15.8 L17.9,6.9" fill="none" stroke="#fff" stroke-width="1.4" stroke-linecap="round" stroke-linejoin="round"/></svg>
<div class="b" style="left:822.20px;top:748.10px;width:23.70px;height:23.80px;background:#03701a;border-radius:6.5px;"></div>
<svg class="b" style="left:822.20px;top:748.10px;width:23.80px;height:23.80px;" viewBox="0 0 23.8 23.8"><path d="M4.9,11.4 L9.3,15.8 L17.9,6.9" fill="none" stroke="#fff" stroke-width="1.4" stroke-linecap="round" stroke-linejoin="round"/></svg>
<div id="t28" class="t" style="left:163.10px;top:782.35px;font-size:25px;line-height:25px;color:#1a2233;">chain_linear_t7</div>
<div class="b" style="left:149.20px;top:809.00px;width:547.60px;height:2.00px;background:#dfe3ea;"></div>
<div class="b" style="left:700.10px;top:782.10px;width:23.70px;height:23.80px;background:#03701a;border-radius:6.5px;"></div>
<svg class="b" style="left:700.10px;top:782.10px;width:23.80px;height:23.80px;" viewBox="0 0 23.8 23.8"><path d="M4.9,11.4 L9.3,15.8 L17.9,6.9" fill="none" stroke="#fff" stroke-width="1.4" stroke-linecap="round" stroke-linejoin="round"/></svg>
<div class="b" style="left:731.00px;top:782.10px;width:23.70px;height:23.80px;background:#03701a;border-radius:6.5px;"></div>
<svg class="b" style="left:731.00px;top:782.10px;width:23.80px;height:23.80px;" viewBox="0 0 23.8 23.8"><path d="M4.9,11.4 L9.3,15.8 L17.9,6.9" fill="none" stroke="#fff" stroke-width="1.4" stroke-linecap="round" stroke-linejoin="round"/></svg>
<div class="b" style="left:761.30px;top:782.10px;width:23.70px;height:23.80px;background:#03701a;border-radius:6.5px;"></div>
<svg class="b" style="left:761.30px;top:782.10px;width:23.80px;height:23.80px;" viewBox="0 0 23.8 23.8"><path d="M4.9,11.4 L9.3,15.8 L17.9,6.9" fill="none" stroke="#fff" stroke-width="1.4" stroke-linecap="round" stroke-linejoin="round"/></svg>
<div class="b" style="left:792.10px;top:782.10px;width:23.70px;height:23.80px;background:#03701a;border-radius:6.5px;"></div>
<svg class="b" style="left:792.10px;top:782.10px;width:23.80px;height:23.80px;" viewBox="0 0 23.8 23.8"><path d="M4.9,11.4 L9.3,15.8 L17.9,6.9" fill="none" stroke="#fff" stroke-width="1.4" stroke-linecap="round" stroke-linejoin="round"/></svg>
<div class="b" style="left:822.20px;top:782.10px;width:23.70px;height:23.80px;background:#03701a;border-radius:6.5px;"></div>
<svg class="b" style="left:822.20px;top:782.10px;width:23.80px;height:23.80px;" viewBox="0 0 23.8 23.8"><path d="M4.9,11.4 L9.3,15.8 L17.9,6.9" fill="none" stroke="#fff" stroke-width="1.4" stroke-linecap="round" stroke-linejoin="round"/></svg>
<div id="t29" class="t" style="left:163.10px;top:816.35px;font-size:25px;line-height:25px;color:#1a2233;">chain_linear_t8</div>
<div class="b" style="left:149.20px;top:843.00px;width:547.60px;height:2.00px;background:#dfe3ea;"></div>
<div class="b" style="left:700.10px;top:816.10px;width:23.70px;height:23.80px;background:#03701a;border-radius:6.5px;"></div>
<svg class="b" style="left:700.10px;top:816.10px;width:23.80px;height:23.80px;" viewBox="0 0 23.8 23.8"><path d="M4.9,11.4 L9.3,15.8 L17.9,6.9" fill="none" stroke="#fff" stroke-width="1.4" stroke-linecap="round" stroke-linejoin="round"/></svg>
<div class="b" style="left:731.00px;top:816.10px;width:23.70px;height:23.80px;background:#03701a;border-radius:6.5px;"></div>
<svg class="b" style="left:731.00px;top:816.10px;width:23.80px;height:23.80px;" viewBox="0 0 23.8 23.8"><path d="M4.9,11.4 L9.3,15.8 L17.9,6.9" fill="none" stroke="#fff" stroke-width="1.4" stroke-linecap="round" stroke-linejoin="round"/></svg>
<div class="b" style="left:761.30px;top:816.10px;width:23.70px;height:23.80px;background:#03701a;border-radius:6.5px;"></div>
<svg class="b" style="left:761.30px;top:816.10px;width:23.80px;height:23.80px;" viewBox="0 0 23.8 23.8"><path d="M4.9,11.4 L9.3,15.8 L17.9,6.9" fill="none" stroke="#fff" stroke-width="1.4" stroke-linecap="round" stroke-linejoin="round"/></svg>
<div class="b" style="left:792.10px;top:816.10px;width:23.70px;height:23.80px;background:#03701a;border-radius:6.5px;"></div>
<svg class="b" style="left:792.10px;top:816.10px;width:23.80px;height:23.80px;" viewBox="0 0 23.8 23.8"><path d="M4.9,11.4 L9.3,15.8 L17.9,6.9" fill="none" stroke="#fff" stroke-width="1.4" stroke-linecap="round" stroke-linejoin="round"/></svg>
<div class="b" style="left:822.20px;top:816.10px;width:23.70px;height:23.80px;background:#03701a;border-radius:6.5px;"></div>
<svg class="b" style="left:822.20px;top:816.10px;width:23.80px;height:23.80px;" viewBox="0 0 23.8 23.8"><path d="M4.9,11.4 L9.3,15.8 L17.9,6.9" fill="none" stroke="#fff" stroke-width="1.4" stroke-linecap="round" stroke-linejoin="round"/></svg>
<div id="t30" class="t" style="left:163.10px;top:850.35px;font-size:25px;line-height:25px;color:#1a2233;">chain_linear_t9</div>
<div class="b" style="left:149.20px;top:877.00px;width:547.60px;height:2.00px;background:#dfe3ea;"></div>
<div class="b" style="left:700.10px;top:850.10px;width:23.70px;height:23.80px;background:#03701a;border-radius:6.5px;"></div>
<svg class="b" style="left:700.10px;top:850.10px;width:23.80px;height:23.80px;" viewBox="0 0 23.8 23.8"><path d="M4.9,11.4 L9.3,15.8 L17.9,6.9" fill="none" stroke="#fff" stroke-width="1.4" stroke-linecap="round" stroke-linejoin="round"/></svg>
<div class="b" style="left:731.00px;top:850.10px;width:23.70px;height:23.80px;background:#03701a;border-radius:6.5px;"></div>
<svg class="b" style="left:731.00px;top:850.10px;width:23.80px;height:23.80px;" viewBox="0 0 23.8 23.8"><path d="M4.9,11.4 L9.3,15.8 L17.9,6.9" fill="none" stroke="#fff" stroke-width="1.4" stroke-linecap="round" stroke-linejoin="round"/></svg>
<div class="b" style="left:761.30px;top:850.10px;width:23.70px;height:23.80px;background:#03701a;border-radius:6.5px;"></div>
<svg class="b" style="left:761.30px;top:850.10px;width:23.80px;height:23.80px;" viewBox="0 0 23.8 23.8"><path d="M4.9,11.4 L9.3,15.8 L17.9,6.9" fill="none" stroke="#fff" stroke-width="1.4" stroke-linecap="round" stroke-linejoin="round"/></svg>
<div class="b" style="left:792.10px;top:850.10px;width:23.70px;height:23.80px;background:#03701a;border-radius:6.5px;"></div>
<svg class="b" style="left:792.10px;top:850.10px;width:23.80px;height:23.80px;" viewBox="0 0 23.8 23.8"><path d="M4.9,11.4 L9.3,15.8 L17.9,6.9" fill="none" stroke="#fff" stroke-width="1.4" stroke-linecap="round" stroke-linejoin="round"/></svg>
<div class="b" style="left:822.20px;top:850.10px;width:23.70px;height:23.80px;background:#03701a;border-radius:6.5px;"></div>
<svg class="b" style="left:822.20px;top:850.10px;width:23.80px;height:23.80px;" viewBox="0 0 23.8 23.8"><path d="M4.9,11.4 L9.3,15.8 L17.9,6.9" fill="none" stroke="#fff" stroke-width="1.4" stroke-linecap="round" stroke-linejoin="round"/></svg>
<div id="t31" class="t" style="left:163.10px;top:884.35px;font-size:25px;line-height:25px;color:#1a2233;">chain_t10</div>
<div class="b" style="left:149.20px;top:911.00px;width:547.60px;height:2.00px;background:#dfe3ea;"></div>
<div class="b" style="left:700.10px;top:884.10px;width:23.70px;height:23.80px;background:#03701a;border-radius:6.5px;"></div>
<svg class="b" style="left:700.10px;top:884.10px;width:23.80px;height:23.80px;" viewBox="0 0 23.8 23.8"><path d="M4.9,11.4 L9.3,15.8 L17.9,6.9" fill="none" stroke="#fff" stroke-width="1.4" stroke-linecap="round" stroke-linejoin="round"/></svg>
<div class="b" style="left:731.00px;top:884.10px;width:23.70px;height:23.80px;background:#03701a;border-radius:6.5px;"></div>
<svg class="b" style="left:731.00px;top:884.10px;width:23.80px;height:23.80px;" viewBox="0 0 23.8 23.8"><path d="M4.9,11.4 L9.3,15.8 L17.9,6.9" fill="none" stroke="#fff" stroke-width="1.4" stroke-linecap="round" stroke-linejoin="round"/></svg>
<div class="b" style="left:761.30px;top:884.10px;width:23.70px;height:23.80px;background:#03701a;border-radius:6.5px;"></div>
<svg class="b" style="left:761.30px;top:884.10px;width:23.80px;height:23.80px;" viewBox="0 0 23.8 23.8"><path d="M4.9,11.4 L9.3,15.8 L17.9,6.9" fill="none" stroke="#fff" stroke-width="1.4" stroke-linecap="round" stroke-linejoin="round"/></svg>
<div class="b" style="left:792.10px;top:884.10px;width:23.70px;height:23.80px;background:#03701a;border-radius:6.5px;"></div>
<svg class="b" style="left:792.10px;top:884.10px;width:23.80px;height:23.80px;" viewBox="0 0 23.8 23.8"><path d="M4.9,11.4 L9.3,15.8 L17.9,6.9" fill="none" stroke="#fff" stroke-width="1.4" stroke-linecap="round" stroke-linejoin="round"/></svg>
<div class="b" style="left:822.20px;top:884.10px;width:23.70px;height:23.80px;background:#03701a;border-radius:6.5px;"></div>
<svg class="b" style="left:822.20px;top:884.10px;width:23.80px;height:23.80px;" viewBox="0 0 23.8 23.8"><path d="M4.9,11.4 L9.3,15.8 L17.9,6.9" fill="none" stroke="#fff" stroke-width="1.4" stroke-linecap="round" stroke-linejoin="round"/></svg>
<div id="t32" class="t" style="left:163.10px;top:918.35px;font-size:25px;line-height:25px;color:#1a2233;">chain_t11</div>
<div class="b" style="left:149.20px;top:945.00px;width:547.60px;height:2.00px;background:#dfe3ea;"></div>
<div class="b" style="left:700.10px;top:918.10px;width:23.70px;height:23.80px;background:#03701a;border-radius:6.5px;"></div>
<svg class="b" style="left:700.10px;top:918.10px;width:23.80px;height:23.80px;" viewBox="0 0 23.8 23.8"><path d="M4.9,11.4 L9.3,15.8 L17.9,6.9" fill="none" stroke="#fff" stroke-width="1.4" stroke-linecap="round" stroke-linejoin="round"/></svg>
<div class="b" style="left:731.00px;top:918.10px;width:23.70px;height:23.80px;background:#03701a;border-radius:6.5px;"></div>
<svg class="b" style="left:731.00px;top:918.10px;width:23.80px;height:23.80px;" viewBox="0 0 23.8 23.8"><path d="M4.9,11.4 L9.3,15.8 L17.9,6.9" fill="none" stroke="#fff" stroke-width="1.4" stroke-linecap="round" stroke-linejoin="round"/></svg>
<div class="b" style="left:761.30px;top:918.10px;width:23.70px;height:23.80px;background:#03701a;border-radius:6.5px;"></div>
<svg class="b" style="left:761.30px;top:918.10px;width:23.80px;height:23.80px;" viewBox="0 0 23.8 23.8"><path d="M4.9,11.4 L9.3,15.8 L17.9,6.9" fill="none" stroke="#fff" stroke-width="1.4" stroke-linecap="round" stroke-linejoin="round"/></svg>
<div class="b" style="left:792.10px;top:918.10px;width:23.70px;height:23.80px;background:#03701a;border-radius:6.5px;"></div>
<svg class="b" style="left:792.10px;top:918.10px;width:23.80px;height:23.80px;" viewBox="0 0 23.8 23.8"><path d="M4.9,11.4 L9.3,15.8 L17.9,6.9" fill="none" stroke="#fff" stroke-width="1.4" stroke-linecap="round" stroke-linejoin="round"/></svg>
<div class="b" style="left:822.20px;top:918.10px;width:23.70px;height:23.80px;background:#03701a;border-radius:6.5px;"></div>
<svg class="b" style="left:822.20px;top:918.10px;width:23.80px;height:23.80px;" viewBox="0 0 23.8 23.8"><path d="M4.9,11.4 L9.3,15.8 L17.9,6.9" fill="none" stroke="#fff" stroke-width="1.4" stroke-linecap="round" stroke-linejoin="round"/></svg>
<div id="t33" class="t" style="left:163.10px;top:952.35px;font-size:25px;line-height:25px;color:#1a2233;">empty_1</div>
<div class="b" style="left:149.20px;top:979.00px;width:547.60px;height:2.00px;background:#dfe3ea;"></div>
<div class="b" style="left:700.10px;top:952.10px;width:23.70px;height:23.80px;background:#03701a;border-radius:6.5px;"></div>
<svg class="b" style="left:700.10px;top:952.10px;width:23.80px;height:23.80px;" viewBox="0 0 23.8 23.8"><path d="M4.9,11.4 L9.3,15.8 L17.9,6.9" fill="none" stroke="#fff" stroke-width="1.4" stroke-linecap="round" stroke-linejoin="round"/></svg>
<div class="b" style="left:731.00px;top:952.10px;width:23.70px;height:23.80px;background:#03701a;border-radius:6.5px;"></div>
<svg class="b" style="left:731.00px;top:952.10px;width:23.80px;height:23.80px;" viewBox="0 0 23.8 23.8"><path d="M4.9,11.4 L9.3,15.8 L17.9,6.9" fill="none" stroke="#fff" stroke-width="1.4" stroke-linecap="round" stroke-linejoin="round"/></svg>
<div class="b" style="left:761.30px;top:952.10px;width:23.70px;height:23.80px;background:#03701a;border-radius:6.5px;"></div>
<svg class="b" style="left:761.30px;top:952.10px;width:23.80px;height:23.80px;" viewBox="0 0 23.8 23.8"><path d="M4.9,11.4 L9.3,15.8 L17.9,6.9" fill="none" stroke="#fff" stroke-width="1.4" stroke-linecap="round" stroke-linejoin="round"/></svg>
<div class="b" style="left:792.10px;top:952.10px;width:23.70px;height:23.80px;background:#03701a;border-radius:6.5px;"></div>
<svg class="b" style="left:792.10px;top:952.10px;width:23.80px;height:23.80px;" viewBox="0 0 23.8 23.8"><path d="M4.9,11.4 L9.3,15.8 L17.9,6.9" fill="none" stroke="#fff" stroke-width="1.4" stroke-linecap="round" stroke-linejoin="round"/></svg>
<div class="b" style="left:822.20px;top:952.10px;width:23.70px;height:23.80px;background:#d42424;border-radius:6.5px;"></div>
<svg class="b" style="left:822.20px;top:952.10px;width:23.80px;height:23.80px;" viewBox="0 0 23.8 23.8"><path d="M7.5,7.5 L16.3,16.3 M16.3,7.5 L7.5,16.3" fill="none" stroke="#fff" stroke-width="1.8" stroke-linecap="round"/></svg>
<div id="t34" class="t" style="left:163.10px;top:986.35px;font-size:25px;line-height:25px;color:#1a2233;">end_chain_linear</div>
<div class="b" style="left:149.20px;top:1013.00px;width:547.60px;height:2.00px;background:#dfe3ea;"></div>
<div class="b" style="left:700.10px;top:986.10px;width:23.70px;height:23.80px;background:#03701a;border-radius:6.5px;"></div>
<svg class="b" style="left:700.10px;top:986.10px;width:23.80px;height:23.80px;" viewBox="0 0 23.8 23.8"><path d="M4.9,11.4 L9.3,15.8 L17.9,6.9" fill="none" stroke="#fff" stroke-width="1.4" stroke-linecap="round" stroke-linejoin="round"/></svg>
<div class="b" style="left:731.00px;top:986.10px;width:23.70px;height:23.80px;background:#03701a;border-radius:6.5px;"></div>
<svg class="b" style="left:731.00px;top:986.10px;width:23.80px;height:23.80px;" viewBox="0 0 23.8 23.8"><path d="M4.9,11.4 L9.3,15.8 L17.9,6.9" fill="none" stroke="#fff" stroke-width="1.4" stroke-linecap="round" stroke-linejoin="round"/></svg>
<div class="b" style="left:761.30px;top:986.10px;width:23.70px;height:23.80px;background:#03701a;border-radius:6.5px;"></div>
<svg class="b" style="left:761.30px;top:986.10px;width:23.80px;height:23.80px;" viewBox="0 0 23.8 23.8"><path d="M4.9,11.4 L9.3,15.8 L17.9,6.9" fill="none" stroke="#fff" stroke-width="1.4" stroke-linecap="round" stroke-linejoin="round"/></svg>
<div class="b" style="left:792.10px;top:986.10px;width:23.70px;height:23.80px;background:#03701a;border-radius:6.5px;"></div>
<svg class="b" style="left:792.10px;top:986.10px;width:23.80px;height:23.80px;" viewBox="0 0 23.8 23.8"><path d="M4.9,11.4 L9.3,15.8 L17.9,6.9" fill="none" stroke="#fff" stroke-width="1.4" stroke-linecap="round" stroke-linejoin="round"/></svg>
<div class="b" style="left:822.20px;top:986.10px;width:23.70px;height:23.80px;background:#03701a;border-radius:6.5px;"></div>
<svg class="b" style="left:822.20px;top:986.10px;width:23.80px;height:23.80px;" viewBox="0 0 23.8 23.8"><path d="M4.9,11.4 L9.3,15.8 L17.9,6.9" fill="none" stroke="#fff" stroke-width="1.4" stroke-linecap="round" stroke-linejoin="round"/></svg>
<div id="t35" class="t" style="left:163.10px;top:1020.35px;font-size:25px;line-height:25px;color:#1a2233;">chain_t12</div>
<div class="b" style="left:149.20px;top:1047.00px;width:547.60px;height:2.00px;background:#dfe3ea;"></div>
<div class="b" style="left:700.10px;top:1020.10px;width:23.70px;height:23.80px;background:#03701a;border-radius:6.5px;"></div>
<svg class="b" style="left:700.10px;top:1020.10px;width:23.80px;height:23.80px;" viewBox="0 0 23.8 23.8"><path d="M4.9,11.4 L9.3,15.8 L17.9,6.9" fill="none" stroke="#fff" stroke-width="1.4" stroke-linecap="round" stroke-linejoin="round"/></svg>
<div class="b" style="left:731.00px;top:1020.10px;width:23.70px;height:23.80px;background:#03701a;border-radius:6.5px;"></div>
<svg class="b" style="left:731.00px;top:1020.10px;width:23.80px;height:23.80px;" viewBox="0 0 23.8 23.8"><path d="M4.9,11.4 L9.3,15.8 L17.9,6.9" fill="none" stroke="#fff" stroke-width="1.4" stroke-linecap="round" stroke-linejoin="round"/></svg>
<div class="b" style="left:761.30px;top:1020.10px;width:23.70px;height:23.80px;background:#03701a;border-radius:6.5px;"></div>
<svg class="b" style="left:761.30px;top:1020.10px;width:23.80px;height:23.80px;" viewBox="0 0 23.8 23.8"><path d="M4.9,11.4 L9.3,15.8 L17.9,6.9" fill="none" stroke="#fff" stroke-width="1.4" stroke-linecap="round" stroke-linejoin="round"/></svg>
<div class="b" style="left:792.10px;top:1020.10px;width:23.70px;height:23.80px;background:#03701a;border-radius:6.5px;"></div>
<svg class="b" style="left:792.10px;top:1020.10px;width:23.80px;height:23.80px;" viewBox="0 0 23.8 23.8"><path d="M4.9,11.4 L9.3,15.8 L17.9,6.9" fill="none" stroke="#fff" stroke-width="1.4" stroke-linecap="round" stroke-linejoin="round"/></svg>
<div class="b" style="left:822.20px;top:1020.10px;width:23.70px;height:23.80px;background:#ca4a24;border-radius:6.5px;"></div>
<svg class="b" style="left:822.20px;top:1020.10px;width:23.80px;height:23.80px;" viewBox="0 0 23.8 23.8"><path d="M11.30,4.40 A7.1,7.1 0 0 1 16.23,16.61 M14.63,17.77 A7.1,7.1 0 0 1 8.64,18.08 M6.74,16.94 A7.1,7.1 0 0 1 4.76,14.27 M4.21,11.87 A7.1,7.1 0 0 1 4.81,8.61" fill="none" stroke="#fff" stroke-width="1.3" stroke-linecap="butt"/><circle cx="6.37" cy="6.39" r="0.8" fill="#fff"/><path d="M11.3,14.8 L11.3,8.4 M8.2,11.5 L11.3,8.3 L14.4,11.5" fill="none" stroke="#fff" stroke-width="1.3" stroke-linecap="round" stroke-linejoin="round"/></svg>
<div id="t36" class="t" style="left:163.10px;top:1054.35px;font-size:25px;line-height:25px;color:#1a2233;">chain_t13</div>
<div class="b" style="left:149.20px;top:1081.00px;width:547.60px;height:2.00px;background:#dfe3ea;"></div>
<div class="b" style="left:700.10px;top:1054.10px;width:23.70px;height:23.80px;background:#03701a;border-radius:6.5px;"></div>
<svg class="b" style="left:700.10px;top:1054.10px;width:23.80px;height:23.80px;" viewBox="0 0 23.8 23.8"><path d="M4.9,11.4 L9.3,15.8 L17.9,6.9" fill="none" stroke="#fff" stroke-width="1.4" stroke-linecap="round" stroke-linejoin="round"/></svg>
<div class="b" style="left:731.00px;top:1054.10px;width:23.70px;height:23.80px;background:#03701a;border-radius:6.5px;"></div>
<svg class="b" style="left:731.00px;top:1054.10px;width:23.80px;height:23.80px;" viewBox="0 0 23.8 23.8"><path d="M4.9,11.4 L9.3,15.8 L17.9,6.9" fill="none" stroke="#fff" stroke-width="1.4" stroke-linecap="round" stroke-linejoin="round"/></svg>
<div class="b" style="left:761.30px;top:1054.10px;width:23.70px;height:23.80px;background:#03701a;border-radius:6.5px;"></div>
<svg class="b" style="left:761.30px;top:1054.10px;width:23.80px;height:23.80px;" viewBox="0 0 23.8 23.8"><path d="M4.9,11.4 L9.3,15.8 L17.9,6.9" fill="none" stroke="#fff" stroke-width="1.4" stroke-linecap="round" stroke-linejoin="round"/></svg>
<div class="b" style="left:792.10px;top:1054.10px;width:23.70px;height:23.80px;background:#03701a;border-radius:6.5px;"></div>
<svg class="b" style="left:792.10px;top:1054.10px;width:23.80px;height:23.80px;" viewBox="0 0 23.8 23.8"><path d="M4.9,11.4 L9.3,15.8 L17.9,6.9" fill="none" stroke="#fff" stroke-width="1.4" stroke-linecap="round" stroke-linejoin="round"/></svg>
<div class="b" style="left:822.20px;top:1054.10px;width:23.70px;height:23.80px;background:#ca4a24;border-radius:6.5px;"></div>
<svg class="b" style="left:822.20px;top:1054.10px;width:23.80px;height:23.80px;" viewBox="0 0 23.8 23.8"><path d="M11.30,4.40 A7.1,7.1 0 0 1 16.23,16.61 M14.63,17.77 A7.1,7.1 0 0 1 8.64,18.08 M6.74,16.94 A7.1,7.1 0 0 1 4.76,14.27 M4.21,11.87 A7.1,7.1 0 0 1 4.81,8.61" fill="none" stroke="#fff" stroke-width="1.3" stroke-linecap="butt"/><circle cx="6.37" cy="6.39" r="0.8" fill="#fff"/><path d="M11.3,14.8 L11.3,8.4 M8.2,11.5 L11.3,8.3 L14.4,11.5" fill="none" stroke="#fff" stroke-width="1.3" stroke-linecap="round" stroke-linejoin="round"/></svg>
<div id="t37" class="t" style="left:163.10px;top:1088.35px;font-size:25px;line-height:25px;color:#1a2233;">chain_t14</div>
<div class="b" style="left:149.20px;top:1115.00px;width:547.60px;height:2.00px;background:#dfe3ea;"></div>
<div class="b" style="left:700.10px;top:1088.10px;width:23.70px;height:23.80px;background:#03701a;border-radius:6.5px;"></div>
<svg class="b" style="left:700.10px;top:1088.10px;width:23.80px;height:23.80px;" viewBox="0 0 23.8 23.8"><path d="M4.9,11.4 L9.3,15.8 L17.9,6.9" fill="none" stroke="#fff" stroke-width="1.4" stroke-linecap="round" stroke-linejoin="round"/></svg>
<div class="b" style="left:731.00px;top:1088.10px;width:23.70px;height:23.80px;background:#03701a;border-radius:6.5px;"></div>
<svg class="b" style="left:731.00px;top:1088.10px;width:23.80px;height:23.80px;" viewBox="0 0 23.8 23.8"><path d="M4.9,11.4 L9.3,15.8 L17.9,6.9" fill="none" stroke="#fff" stroke-width="1.4" stroke-linecap="round" stroke-linejoin="round"/></svg>
<div class="b" style="left:761.30px;top:1088.10px;width:23.70px;height:23.80px;background:#03701a;border-radius:6.5px;"></div>
<svg class="b" style="left:761.30px;top:1088.10px;width:23.80px;height:23.80px;" viewBox="0 0 23.8 23.8"><path d="M4.9,11.4 L9.3,15.8 L17.9,6.9" fill="none" stroke="#fff" stroke-width="1.4" stroke-linecap="round" stroke-linejoin="round"/></svg>
<div class="b" style="left:792.10px;top:1088.10px;width:23.70px;height:23.80px;background:#03701a;border-radius:6.5px;"></div>
<svg class="b" style="left:792.10px;top:1088.10px;width:23.80px;height:23.80px;" viewBox="0 0 23.8 23.8"><path d="M4.9,11.4 L9.3,15.8 L17.9,6.9" fill="none" stroke="#fff" stroke-width="1.4" stroke-linecap="round" stroke-linejoin="round"/></svg>
<div class="b" style="left:822.20px;top:1088.10px;width:23.70px;height:23.80px;background:#ca4a24;border-radius:6.5px;"></div>
<svg class="b" style="left:822.20px;top:1088.10px;width:23.80px;height:23.80px;" viewBox="0 0 23.8 23.8"><path d="M11.30,4.40 A7.1,7.1 0 0 1 16.23,16.61 M14.63,17.77 A7.1,7.1 0 0 1 8.64,18.08 M6.74,16.94 A7.1,7.1 0 0 1 4.76,14.27 M4.21,11.87 A7.1,7.1 0 0 1 4.81,8.61" fill="none" stroke="#fff" stroke-width="1.3" stroke-linecap="butt"/><circle cx="6.37" cy="6.39" r="0.8" fill="#fff"/><path d="M11.3,14.8 L11.3,8.4 M8.2,11.5 L11.3,8.3 L14.4,11.5" fill="none" stroke="#fff" stroke-width="1.3" stroke-linecap="round" stroke-linejoin="round"/></svg>
<div id="t38" class="t" style="left:163.10px;top:1122.35px;font-size:25px;line-height:25px;color:#1a2233;">chain_t15</div>
<div class="b" style="left:149.20px;top:1149.00px;width:547.60px;height:2.00px;background:#dfe3ea;"></div>
<div class="b" style="left:700.10px;top:1122.10px;width:23.70px;height:23.80px;background:#03701a;border-radius:6.5px;"></div>
<svg class="b" style="left:700.10px;top:1122.10px;width:23.80px;height:23.80px;" viewBox="0 0 23.8 23.8"><path d="M4.9,11.4 L9.3,15.8 L17.9,6.9" fill="none" stroke="#fff" stroke-width="1.4" stroke-linecap="round" stroke-linejoin="round"/></svg>
<div class="b" style="left:731.00px;top:1122.10px;width:23.70px;height:23.80px;background:#03701a;border-radius:6.5px;"></div>
<svg class="b" style="left:731.00px;top:1122.10px;width:23.80px;height:23.80px;" viewBox="0 0 23.8 23.8"><path d="M4.9,11.4 L9.3,15.8 L17.9,6.9" fill="none" stroke="#fff" stroke-width="1.4" stroke-linecap="round" stroke-linejoin="round"/></svg>
<div class="b" style="left:761.30px;top:1122.10px;width:23.70px;height:23.80px;background:#03701a;border-radius:6.5px;"></div>
<svg class="b" style="left:761.30px;top:1122.10px;width:23.80px;height:23.80px;" viewBox="0 0 23.8 23.8"><path d="M4.9,11.4 L9.3,15.8 L17.9,6.9" fill="none" stroke="#fff" stroke-width="1.4" stroke-linecap="round" stroke-linejoin="round"/></svg>
<div class="b" style="left:792.10px;top:1122.10px;width:23.70px;height:23.80px;background:#03701a;border-radius:6.5px;"></div>
<svg class="b" style="left:792.10px;top:1122.10px;width:23.80px;height:23.80px;" viewBox="0 0 23.8 23.8"><path d="M4.9,11.4 L9.3,15.8 L17.9,6.9" fill="none" stroke="#fff" stroke-width="1.4" stroke-linecap="round" stroke-linejoin="round"/></svg>
<div class="b" style="left:822.20px;top:1122.10px;width:23.70px;height:23.80px;background:#ca4a24;border-radius:6.5px;"></div>
<svg class="b" style="left:822.20px;top:1122.10px;width:23.80px;height:23.80px;" viewBox="0 0 23.8 23.8"><path d="M11.30,4.40 A7.1,7.1 0 0 1 16.23,16.61 M14.63,17.77 A7.1,7.1 0 0 1 8.64,18.08 M6.74,16.94 A7.1,7.1 0 0 1 4.76,14.27 M4.21,11.87 A7.1,7.1 0 0 1 4.81,8.61" fill="none" stroke="#fff" stroke-width="1.3" stroke-linecap="butt"/><circle cx="6.37" cy="6.39" r="0.8" fill="#fff"/><path d="M11.3,14.8 L11.3,8.4 M8.2,11.5 L11.3,8.3 L14.4,11.5" fill="none" stroke="#fff" stroke-width="1.3" stroke-linecap="round" stroke-linejoin="round"/></svg>
<div id="t39" class="t" style="left:163.10px;top:1156.35px;font-size:25px;line-height:25px;color:#1a2233;">chain_t16</div>
<div class="b" style="left:149.20px;top:1183.00px;width:547.60px;height:2.00px;background:#dfe3ea;"></div>
<div class="b" style="left:700.10px;top:1156.10px;width:23.70px;height:23.80px;background:#03701a;border-radius:6.5px;"></div>
<svg class="b" style="left:700.10px;top:1156.10px;width:23.80px;height:23.80px;" viewBox="0 0 23.8 23.8"><path d="M4.9,11.4 L9.3,15.8 L17.9,6.9" fill="none" stroke="#fff" stroke-width="1.4" stroke-linecap="round" stroke-linejoin="round"/></svg>
<div class="b" style="left:731.00px;top:1156.10px;width:23.70px;height:23.80px;background:#03701a;border-radius:6.5px;"></div>
<svg class="b" style="left:731.00px;top:1156.10px;width:23.80px;height:23.80px;" viewBox="0 0 23.8 23.8"><path d="M4.9,11.4 L9.3,15.8 L17.9,6.9" fill="none" stroke="#fff" stroke-width="1.4" stroke-linecap="round" stroke-linejoin="round"/></svg>
<div class="b" style="left:761.30px;top:1156.10px;width:23.70px;height:23.80px;background:#03701a;border-radius:6.5px;"></div>
<svg class="b" style="left:761.30px;top:1156.10px;width:23.80px;height:23.80px;" viewBox="0 0 23.8 23.8"><path d="M4.9,11.4 L9.3,15.8 L17.9,6.9" fill="none" stroke="#fff" stroke-width="1.4" stroke-linecap="round" stroke-linejoin="round"/></svg>
<div class="b" style="left:792.10px;top:1156.10px;width:23.70px;height:23.80px;background:#03701a;border-radius:6.5px;"></div>
<svg class="b" style="left:792.10px;top:1156.10px;width:23.80px;height:23.80px;" viewBox="0 0 23.8 23.8"><path d="M4.9,11.4 L9.3,15.8 L17.9,6.9" fill="none" stroke="#fff" stroke-width="1.4" stroke-linecap="round" stroke-linejoin="round"/></svg>
<div class="b" style="left:822.20px;top:1156.10px;width:23.70px;height:23.80px;background:#ca4a24;border-radius:6.5px;"></div>
<svg class="b" style="left:822.20px;top:1156.10px;width:23.80px;height:23.80px;" viewBox="0 0 23.8 23.8"><path d="M11.30,4.40 A7.1,7.1 0 0 1 16.23,16.61 M14.63,17.77 A7.1,7.1 0 0 1 8.64,18.08 M6.74,16.94 A7.1,7.1 0 0 1 4.76,14.27 M4.21,11.87 A7.1,7.1 0 0 1 4.81,8.61" fill="none" stroke="#fff" stroke-width="1.3" stroke-linecap="butt"/><circle cx="6.37" cy="6.39" r="0.8" fill="#fff"/><path d="M11.3,14.8 L11.3,8.4 M8.2,11.5 L11.3,8.3 L14.4,11.5" fill="none" stroke="#fff" stroke-width="1.3" stroke-linecap="round" stroke-linejoin="round"/></svg>
<div id="t40" class="t" style="left:163.10px;top:1190.35px;font-size:25px;line-height:25px;color:#1a2233;">chain_t17</div>
<div class="b" style="left:149.20px;top:1217.00px;width:547.60px;height:2.00px;background:#dfe3ea;"></div>
<div class="b" style="left:700.10px;top:1190.10px;width:23.70px;height:23.80px;background:#03701a;border-radius:6.5px;"></div>
<svg class="b" style="left:700.10px;top:1190.10px;width:23.80px;height:23.80px;" viewBox="0 0 23.8 23.8"><path d="M4.9,11.4 L9.3,15.8 L17.9,6.9" fill="none" stroke="#fff" stroke-width="1.4" stroke-linecap="round" stroke-linejoin="round"/></svg>
<div class="b" style="left:731.00px;top:1190.10px;width:23.70px;height:23.80px;background:#03701a;border-radius:6.5px;"></div>
<svg class="b" style="left:731.00px;top:1190.10px;width:23.80px;height:23.80px;" viewBox="0 0 23.8 23.8"><path d="M4.9,11.4 L9.3,15.8 L17.9,6.9" fill="none" stroke="#fff" stroke-width="1.4" stroke-linecap="round" stroke-linejoin="round"/></svg>
<div class="b" style="left:761.30px;top:1190.10px;width:23.70px;height:23.80px;background:#03701a;border-radius:6.5px;"></div>
<svg class="b" style="left:761.30px;top:1190.10px;width:23.80px;height:23.80px;" viewBox="0 0 23.8 23.8"><path d="M4.9,11.4 L9.3,15.8 L17.9,6.9" fill="none" stroke="#fff" stroke-width="1.4" stroke-linecap="round" stroke-linejoin="round"/></svg>
<div class="b" style="left:792.10px;top:1190.10px;width:23.70px;height:23.80px;background:#03701a;border-radius:6.5px;"></div>
<svg class="b" style="left:792.10px;top:1190.10px;width:23.80px;height:23.80px;" viewBox="0 0 23.8 23.8"><path d="M4.9,11.4 L9.3,15.8 L17.9,6.9" fill="none" stroke="#fff" stroke-width="1.4" stroke-linecap="round" stroke-linejoin="round"/></svg>
<div class="b" style="left:822.20px;top:1190.10px;width:23.70px;height:23.80px;background:#ca4a24;border-radius:6.5px;"></div>
<svg class="b" style="left:822.20px;top:1190.10px;width:23.80px;height:23.80px;" viewBox="0 0 23.8 23.8"><path d="M11.30,4.40 A7.1,7.1 0 0 1 16.23,16.61 M14.63,17.77 A7.1,7.1 0 0 1 8.64,18.08 M6.74,16.94 A7.1,7.1 0 0 1 4.76,14.27 M4.21,11.87 A7.1,7.1 0 0 1 4.81,8.61" fill="none" stroke="#fff" stroke-width="1.3" stroke-linecap="butt"/><circle cx="6.37" cy="6.39" r="0.8" fill="#fff"/><path d="M11.3,14.8 L11.3,8.4 M8.2,11.5 L11.3,8.3 L14.4,11.5" fill="none" stroke="#fff" stroke-width="1.3" stroke-linecap="round" stroke-linejoin="round"/></svg>
<div id="t41" class="t" style="left:163.10px;top:1224.35px;font-size:25px;line-height:25px;color:#1a2233;">empty_2</div>
<div class="b" style="left:149.20px;top:1251.00px;width:547.60px;height:2.00px;background:#dfe3ea;"></div>
<div class="b" style="left:700.10px;top:1224.10px;width:23.70px;height:23.80px;background:#03701a;border-radius:6.5px;"></div>
<svg class="b" style="left:700.10px;top:1224.10px;width:23.80px;height:23.80px;" viewBox="0 0 23.8 23.8"><path d="M4.9,11.4 L9.3,15.8 L17.9,6.9" fill="none" stroke="#fff" stroke-width="1.4" stroke-linecap="round" stroke-linejoin="round"/></svg>
<div class="b" style="left:731.00px;top:1224.10px;width:23.70px;height:23.80px;background:#03701a;border-radius:6.5px;"></div>
<svg class="b" style="left:731.00px;top:1224.10px;width:23.80px;height:23.80px;" viewBox="0 0 23.8 23.8"><path d="M4.9,11.4 L9.3,15.8 L17.9,6.9" fill="none" stroke="#fff" stroke-width="1.4" stroke-linecap="round" stroke-linejoin="round"/></svg>
<div class="b" style="left:761.30px;top:1224.10px;width:23.70px;height:23.80px;background:#03701a;border-radius:6.5px;"></div>
<svg class="b" style="left:761.30px;top:1224.10px;width:23.80px;height:23.80px;" viewBox="0 0 23.8 23.8"><path d="M4.9,11.4 L9.3,15.8 L17.9,6.9" fill="none" stroke="#fff" stroke-width="1.4" stroke-linecap="round" stroke-linejoin="round"/></svg>
<div class="b" style="left:792.10px;top:1224.10px;width:23.70px;height:23.80px;background:#03701a;border-radius:6.5px;"></div>
<svg class="b" style="left:792.10px;top:1224.10px;width:23.80px;height:23.80px;" viewBox="0 0 23.8 23.8"><path d="M4.9,11.4 L9.3,15.8 L17.9,6.9" fill="none" stroke="#fff" stroke-width="1.4" stroke-linecap="round" stroke-linejoin="round"/></svg>
<div class="b" style="left:822.20px;top:1224.10px;width:23.70px;height:23.80px;background:#ca4a24;border-radius:6.5px;"></div>
<svg class="b" style="left:822.20px;top:1224.10px;width:23.80px;height:23.80px;" viewBox="0 0 23.8 23.8"><path d="M11.30,4.40 A7.1,7.1 0 0 1 16.23,16.61 M14.63,17.77 A7.1,7.1 0 0 1 8.64,18.08 M6.74,16.94 A7.1,7.1 0 0 1 4.76,14.27 M4.21,11.87 A7.1,7.1 0 0 1 4.81,8.61" fill="none" stroke="#fff" stroke-width="1.3" stroke-linecap="butt"/><circle cx="6.37" cy="6.39" r="0.8" fill="#fff"/><path d="M11.3,14.8 L11.3,8.4 M8.2,11.5 L11.3,8.3 L14.4,11.5" fill="none" stroke="#fff" stroke-width="1.3" stroke-linecap="round" stroke-linejoin="round"/></svg>
<div id="t42" class="t" style="left:163.10px;top:1258.35px;font-size:25px;line-height:25px;color:#1a2233;">chain_t18</div>
<div class="b" style="left:149.20px;top:1285.00px;width:547.60px;height:2.00px;background:#dfe3ea;"></div>
<div class="b" style="left:700.10px;top:1258.10px;width:23.70px;height:23.80px;background:#03701a;border-radius:6.5px;"></div>
<svg class="b" style="left:700.10px;top:1258.10px;width:23.80px;height:23.80px;" viewBox="0 0 23.8 23.8"><path d="M4.9,11.4 L9.3,15.8 L17.9,6.9" fill="none" stroke="#fff" stroke-width="1.4" stroke-linecap="round" stroke-linejoin="round"/></svg>
<div class="b" style="left:731.00px;top:1258.10px;width:23.70px;height:23.80px;background:#03701a;border-radius:6.5px;"></div>
<svg class="b" style="left:731.00px;top:1258.10px;width:23.80px;height:23.80px;" viewBox="0 0 23.8 23.8"><path d="M4.9,11.4 L9.3,15.8 L17.9,6.9" fill="none" stroke="#fff" stroke-width="1.4" stroke-linecap="round" stroke-linejoin="round"/></svg>
<div class="b" style="left:761.30px;top:1258.10px;width:23.70px;height:23.80px;background:#03701a;border-radius:6.5px;"></div>
<svg class="b" style="left:761.30px;top:1258.10px;width:23.80px;height:23.80px;" viewBox="0 0 23.8 23.8"><path d="M4.9,11.4 L9.3,15.8 L17.9,6.9" fill="none" stroke="#fff" stroke-width="1.4" stroke-linecap="round" stroke-linejoin="round"/></svg>
<div class="b" style="left:792.10px;top:1258.10px;width:23.70px;height:23.80px;background:#03701a;border-radius:6.5px;"></div>
<svg class="b" style="left:792.10px;top:1258.10px;width:23.80px;height:23.80px;" viewBox="0 0 23.8 23.8"><path d="M4.9,11.4 L9.3,15.8 L17.9,6.9" fill="none" stroke="#fff" stroke-width="1.4" stroke-linecap="round" stroke-linejoin="round"/></svg>
<div class="b" style="left:822.20px;top:1258.10px;width:23.70px;height:23.80px;background:#ca4a24;border-radius:6.5px;"></div>
<svg class="b" style="left:822.20px;top:1258.10px;width:23.80px;height:23.80px;" viewBox="0 0 23.8 23.8"><path d="M11.30,4.40 A7.1,7.1 0 0 1 16.23,16.61 M14.63,17.77 A7.1,7.1 0 0 1 8.64,18.08 M6.74,16.94 A7.1,7.1 0 0 1 4.76,14.27 M4.21,11.87 A7.1,7.1 0 0 1 4.81,8.61" fill="none" stroke="#fff" stroke-width="1.3" stroke-linecap="butt"/><circle cx="6.37" cy="6.39" r="0.8" fill="#fff"/><path d="M11.3,14.8 L11.3,8.4 M8.2,11.5 L11.3,8.3 L14.4,11.5" fill="none" stroke="#fff" stroke-width="1.3" stroke-linecap="round" stroke-linejoin="round"/></svg>
<div id="t43" class="t" style="left:163.10px;top:1292.35px;font-size:25px;line-height:25px;color:#1a2233;">chain_t19</div>
<div class="b" style="left:149.20px;top:1319.00px;width:547.60px;height:2.00px;background:#dfe3ea;"></div>
<div class="b" style="left:700.10px;top:1292.10px;width:23.70px;height:23.80px;background:#03701a;border-radius:6.5px;"></div>
<svg class="b" style="left:700.10px;top:1292.10px;width:23.80px;height:23.80px;" viewBox="0 0 23.8 23.8"><path d="M4.9,11.4 L9.3,15.8 L17.9,6.9" fill="none" stroke="#fff" stroke-width="1.4" stroke-linecap="round" stroke-linejoin="round"/></svg>
<div class="b" style="left:731.00px;top:1292.10px;width:23.70px;height:23.80px;background:#03701a;border-radius:6.5px;"></div>
<svg class="b" style="left:731.00px;top:1292.10px;width:23.80px;height:23.80px;" viewBox="0 0 23.8 23.8"><path d="M4.9,11.4 L9.3,15.8 L17.9,6.9" fill="none" stroke="#fff" stroke-width="1.4" stroke-linecap="round" stroke-linejoin="round"/></svg>
<div class="b" style="left:761.30px;top:1292.10px;width:23.70px;height:23.80px;background:#03701a;border-radius:6.5px;"></div>
<svg class="b" style="left:761.30px;top:1292.10px;width:23.80px;height:23.80px;" viewBox="0 0 23.8 23.8"><path d="M4.9,11.4 L9.3,15.8 L17.9,6.9" fill="none" stroke="#fff" stroke-width="1.4" stroke-linecap="round" stroke-linejoin="round"/></svg>
<div class="b" style="left:792.10px;top:1292.10px;width:23.70px;height:23.80px;background:#03701a;border-radius:6.5px;"></div>
<svg class="b" style="left:792.10px;top:1292.10px;width:23.80px;height:23.80px;" viewBox="0 0 23.8 23.8"><path d="M4.9,11.4 L9.3,15.8 L17.9,6.9" fill="none" stroke="#fff" stroke-width="1.4" stroke-linecap="round" stroke-linejoin="round"/></svg>
<div class="b" style="left:822.20px;top:1292.10px;width:23.70px;height:23.80px;background:#ca4a24;border-radius:6.5px;"></div>
<svg class="b" style="left:822.20px;top:1292.10px;width:23.80px;height:23.80px;" viewBox="0 0 23.8 23.8"><path d="M11.30,4.40 A7.1,7.1 0 0 1 16.23,16.61 M14.63,17.77 A7.1,7.1 0 0 1 8.64,18.08 M6.74,16.94 A7.1,7.1 0 0 1 4.76,14.27 M4.21,11.87 A7.1,7.1 0 0 1 4.81,8.61" fill="none" stroke="#fff" stroke-width="1.3" stroke-linecap="butt"/><circle cx="6.37" cy="6.39" r="0.8" fill="#fff"/><path d="M11.3,14.8 L11.3,8.4 M8.2,11.5 L11.3,8.3 L14.4,11.5" fill="none" stroke="#fff" stroke-width="1.3" stroke-linecap="round" stroke-linejoin="round"/></svg>
<div id="t44" class="t" style="left:163.10px;top:1326.35px;font-size:25px;line-height:25px;color:#1a2233;">end_chain</div>
<div class="b" style="left:149.20px;top:1353.00px;width:547.60px;height:2.00px;background:#dfe3ea;"></div>
<div class="b" style="left:700.10px;top:1326.10px;width:23.70px;height:23.80px;background:#03701a;border-radius:6.5px;"></div>
<svg class="b" style="left:700.10px;top:1326.10px;width:23.80px;height:23.80px;" viewBox="0 0 23.8 23.8"><path d="M4.9,11.4 L9.3,15.8 L17.9,6.9" fill="none" stroke="#fff" stroke-width="1.4" stroke-linecap="round" stroke-linejoin="round"/></svg>
<div class="b" style="left:731.00px;top:1326.10px;width:23.70px;height:23.80px;background:#03701a;border-radius:6.5px;"></div>
<svg class="b" style="left:731.00px;top:1326.10px;width:23.80px;height:23.80px;" viewBox="0 0 23.8 23.8"><path d="M4.9,11.4 L9.3,15.8 L17.9,6.9" fill="none" stroke="#fff" stroke-width="1.4" stroke-linecap="round" stroke-linejoin="round"/></svg>
<div class="b" style="left:761.30px;top:1326.10px;width:23.70px;height:23.80px;background:#03701a;border-radius:6.5px;"></div>
<svg class="b" style="left:761.30px;top:1326.10px;width:23.80px;height:23.80px;" viewBox="0 0 23.8 23.8"><path d="M4.9,11.4 L9.3,15.8 L17.9,6.9" fill="none" stroke="#fff" stroke-width="1.4" stroke-linecap="round" stroke-linejoin="round"/></svg>
<div class="b" style="left:792.10px;top:1326.10px;width:23.70px;height:23.80px;background:#03701a;border-radius:6.5px;"></div>
<svg class="b" style="left:792.10px;top:1326.10px;width:23.80px;height:23.80px;" viewBox="0 0 23.8 23.8"><path d="M4.9,11.4 L9.3,15.8 L17.9,6.9" fill="none" stroke="#fff" stroke-width="1.4" stroke-linecap="round" stroke-linejoin="round"/></svg>
<div class="b" style="left:822.20px;top:1326.10px;width:23.70px;height:23.80px;background:#ca4a24;border-radius:6.5px;"></div>
<svg class="b" style="left:822.20px;top:1326.10px;width:23.80px;height:23.80px;" viewBox="0 0 23.8 23.8"><path d="M11.30,4.40 A7.1,7.1 0 0 1 16.23,16.61 M14.63,17.77 A7.1,7.1 0 0 1 8.64,18.08 M6.74,16.94 A7.1,7.1 0 0 1 4.76,14.27 M4.21,11.87 A7.1,7.1 0 0 1 4.81,8.61" fill="none" stroke="#fff" stroke-width="1.3" stroke-linecap="butt"/><circle cx="6.37" cy="6.39" r="0.8" fill="#fff"/><path d="M11.3,14.8 L11.3,8.4 M8.2,11.5 L11.3,8.3 L14.4,11.5" fill="none" stroke="#fff" stroke-width="1.3" stroke-linecap="round" stroke-linejoin="round"/></svg>
<div class="b" style="left:863.00px;top:97.50px;width:4.00px;height:1607.50px;background:#c5cdd9;"></div>
<div class="b" style="left:867.00px;top:901.20px;width:32.50px;height:40.60px;background:#a4aebd;border-radius:0 20.3px 20.3px 0;box-shadow:0 3px 8px rgba(0,0,0,0.08);"></div>
<svg class="b" style="left:867.00px;top:901.20px;width:32.50px;height:40.60px;" viewBox="0 0 32.5 40.59999999999991"><path d="M7.8,11.5 L16.3,20.3 L7.8,29.1" fill="none" stroke="#fff" stroke-width="2.6" stroke-linecap="round" stroke-linejoin="round"/></svg>
<div class="b" style="left:867.50px;top:97.50px;width:2129.00px;height:210.50px;border:2px solid #c9d0dc;border-radius:15px;box-sizing:border-box;"></div>
<svg class="b" style="left:884.00px;top:128.00px;width:42.00px;height:42.00px;" viewBox="0 0 42 42"><path d="M4.5,10.4 L25.5,10.4 M9.6,10.4 L9.6,28 Q9.6,31.5 13,31.5 L20.5,31.5" fill="none" stroke="#131a2a" stroke-width="2.6" stroke-linecap="round"/><circle cx="32.3" cy="10.4" r="5.1" fill="none" stroke="#131a2a" stroke-width="2.6"/><circle cx="26.8" cy="31.5" r="5.1" fill="none" stroke="#131a2a" stroke-width="2.6"/></svg>
<div id="t45" class="t" style="letter-spacing:0.609px;left:936.60px;top:131.81px;font-size:31.4px;line-height:31.4px;color:#131a2a;-webkit-text-stroke:0.7px #131a2a;">toy_chain_linear_vs_chain_complex</div>
<div class="b" style="left:1475.20px;top:136.00px;width:53.60px;height:26.70px;background:#42597f;border-radius:14px;"></div>
<div class="b" style="left:1504.50px;top:137.50px;width:22.80px;height:23.70px;background:#fff;border-radius:50%;"></div>
<div class="b" style="left:2632.60px;top:113.60px;width:248.40px;height:66.40px;border:2px solid #dde2ea;border-radius:9px;box-sizing:border-box;"></div>
<svg class="b" style="left:2660.00px;top:128.00px;width:36.00px;height:35.00px;" viewBox="0 0 36 35"><path d="M17.9,3.5 L22.1,12.6 L31.8,13.6 L24.5,20.2 L26.6,30 L17.9,25 L9.2,30 L11.3,20.2 L4,13.6 L13.7,12.6 Z" fill="none" stroke="#1b2535" stroke-width="2.5" stroke-linejoin="round"/></svg>
<div id="t46" class="t" style="letter-spacing:-0.041px;left:2709.80px;top:135.12px;font-size:24.8px;line-height:24.8px;color:#1b2535;-webkit-text-stroke:0.3px #1b2535;">Favorite Dag</div>
<div class="b" style="left:2889.40px;top:113.60px;width:90.60px;height:66.40px;border:2px solid #dde2ea;border-radius:9px;box-sizing:border-box;"></div>
<div class="b" style="left:2921.30px;top:135.80px;width:25.30px;height:2.20px;background:#1b2535;border-radius:1px;"></div>
<div class="b" style="left:2921.30px;top:144.70px;width:25.30px;height:2.20px;background:#1b2535;border-radius:1px;"></div>
<div class="b" style="left:2921.30px;top:153.30px;width:25.30px;height:2.20px;background:#1b2535;border-radius:1px;"></div>
<div id="t47" class="t" style="letter-spacing:0.698px;left:882.70px;top:199.80px;font-size:21.3px;line-height:21.3px;color:#3f5574;-webkit-text-stroke:0.95px #3f5574;">Schedule</div>
<div id="t48" class="t" style="letter-spacing:0.554px;left:1152.30px;top:199.80px;font-size:21.3px;line-height:21.3px;color:#3f5574;-webkit-text-stroke:0.95px #3f5574;">Latest Run</div>
<div id="t49" class="t" style="letter-spacing:0.517px;left:1656.50px;top:199.80px;font-size:21.3px;line-height:21.3px;color:#3f5574;-webkit-text-stroke:0.95px #3f5574;">Next Run</div>
<div id="t50" class="t" style="letter-spacing:0.716px;left:1923.40px;top:199.80px;font-size:21.3px;line-height:21.3px;color:#3f5574;-webkit-text-stroke:0.95px #3f5574;">Owner</div>
<div id="t51" class="t" style="letter-spacing:0.833px;left:2173.40px;top:199.80px;font-size:21.3px;line-height:21.3px;color:#3f5574;-webkit-text-stroke:0.95px #3f5574;">Tags</div>
<div id="t52" class="t" style="letter-spacing:0.626px;left:2789.40px;top:199.80px;font-size:21.3px;line-height:21.3px;color:#3f5574;-webkit-text-stroke:0.95px #3f5574;">Latest Dag Version</div>
<div id="t53" class="t" style="letter-spacing:0.908px;left:1152.30px;top:247.02px;font-size:27.5px;line-height:27.5px;color:#2d62e6;">2025-09-18 16:50:26</div>
<div class="b" style="left:1440.00px;top:235.50px;width:41.50px;height:41.50px;background:#d42424;border-radius:50%;"></div>
<svg class="b" style="left:1440.00px;top:235.50px;width:41.50px;height:41.50px;" viewBox="0 0 41.5 41.5"><path d="M13.030999999999999,13.030999999999999 L28.469,28.469 M28.469,13.030999999999999 L13.030999999999999,28.469" stroke="#fff" stroke-width="1.8" stroke-linecap="round"/></svg>
<div id="t54" class="t" style="letter-spacing:-0.061px;left:1923.40px;top:240.14px;font-size:25.6px;line-height:25.6px;color:#2d62e6;">airflow</div>
<svg class="b" style="left:2170.00px;top:232.00px;width:36.00px;height:36.00px;" viewBox="0 0 36 36"><path d="M5.6,5.4 L19.2,5.4 L31,17.4 Q31.8,18.4 31,19.4 L19.9,30.2 Q18.9,31 17.9,30.2 L5.6,19.1 Z" fill="none" stroke="#131a2a" stroke-width="2.2" stroke-linejoin="round"/><circle cx="12.3" cy="12.2" r="1.3" fill="#131a2a"/></svg>
<div id="t55" class="t" style="letter-spacing:0.011px;left:2212.50px;top:240.31px;font-size:25.4px;line-height:25.4px;color:#1b2535;">toy, chain(), chain_linear(), +2 more</div>
<div id="t56" class="t" style="left:2789.40px;top:242.02px;font-size:27.5px;line-height:27.5px;color:#1b2535;letter-spacing:-1.2px;">v1</div>
<div class="b" style="left:867.00px;top:383.50px;width:2129.00px;height:2.00px;background:#c9d0dc;"></div>
<div class="b" style="left:867.00px;top:382.00px;width:180.00px;height:5.00px;background:#3f76ea;"></div>
<div id="t57" class="t" style="letter-spacing:0.235px;left:894.40px;top:337.12px;font-size:29.5px;line-height:29.5px;color:#131a2a;-webkit-text-stroke:1.35px #131a2a;">Overview</div>
<div id="t58" class="t" style="letter-spacing:-1.192px;left:1074.90px;top:337.12px;font-size:29.5px;line-height:29.5px;color:#3c5372;-webkit-text-stroke:1.35px #3c5372;">Runs</div>
<div id="t59" class="t" style="letter-spacing:-0.255px;left:1197.30px;top:337.12px;font-size:29.5px;line-height:29.5px;color:#3c5372;-webkit-text-stroke:1.35px #3c5372;">Tasks</div>
<div id="t60" class="t" style="letter-spacing:0.040px;left:1327.50px;top:337.12px;font-size:29.5px;line-height:29.5px;color:#3c5372;-webkit-text-stroke:1.35px #3c5372;">Calendar</div>
<div id="t61" class="t" style="letter-spacing:0.255px;left:1503.30px;top:337.12px;font-size:29.5px;line-height:29.5px;color:#3c5372;-webkit-text-stroke:1.35px #3c5372;">Audit Log</div>
<div id="t62" class="t" style="letter-spacing:-0.577px;left:1685.00px;top:337.12px;font-size:29.5px;line-height:29.5px;color:#3c5372;-webkit-text-stroke:1.35px #3c5372;">Code</div>
<div id="t63" class="t" style="letter-spacing:0.355px;left:1809.70px;top:337.12px;font-size:29.5px;line-height:29.5px;color:#3c5372;-webkit-text-stroke:1.35px #3c5372;">Details</div>
<svg class="b" style="left:906.00px;top:444.00px;width:34.00px;height:34.00px;" viewBox="0 0 34 34"><rect x="4" y="6.5" width="26" height="24" rx="3" fill="none" stroke="#1b2535" stroke-width="2.4"/><path d="M4,14 L30,14 M11,3 L11,9 M23,3 L23,9" stroke="#1b2535" stroke-width="2.4" stroke-linecap="round"/></svg>
<div class="b" style="left:953.70px;top:427.50px;width:338.70px;height:66.50px;border:2px solid #dde2ea;border-radius:9px;box-sizing:border-box;"></div>
<div id="t64" class="t" style="letter-spacing:-0.003px;left:975.60px;top:451.17px;font-size:25.1px;line-height:25.1px;color:#1b2535;">Last 24 Hours</div>
<svg class="b" style="left:1248.00px;top:450.00px;width:22.00px;height:16.00px;" viewBox="0 0 22 16"><path d="M3,3.5 L11,11.5 L19,3.5" fill="none" stroke="#3d5577" stroke-width="2.3"/></svg>
<div id="t65" class="t" style="letter-spacing:-0.084px;left:1307.00px;top:447.85px;font-size:29px;line-height:29px;color:#131a2a;">2025-09-17 16:51:57 - 2025-09-18 16:51:57</div>
<div class="b" style="left:907.00px;top:522.50px;width:594.50px;height:85.50px;border:2px solid #c9d0dc;border-radius:9px;box-sizing:border-box;"></div>
<div class="b" style="left:929.80px;top:548.00px;width:33.50px;height:34.00px;background:#d42424;border-radius:8px;"></div>
<div id="t66" class="t" style="left:929.80px;top:555.30px;font-size:22px;line-height:22px;color:#fff;width:33.5px;text-align:center;">4</div>
<div id="t67" class="t" style="letter-spacing:0.388px;left:977.60px;top:553.38px;font-size:25.2px;line-height:25.2px;color:#131a2a;-webkit-text-stroke:1.05px #131a2a;">Failed Tasks</div>
<svg class="b" style="left:1137.00px;top:550.00px;width:342.60px;height:40.00px;" viewBox="0 0 342.5999999999999 40"><path d="M0,33.25 L300.5999999999999,33.25 Q308.5999999999999,33.25 316.5999999999999,26 L340.5999999999999,5 L340.5999999999999,33.25 Z" fill="#fbdede"/><path d="M1,33.25 L300.5999999999999,33.25 Q308.5999999999999,33.25 316.5999999999999,26 L340.5999999999999,5" fill="none" stroke="#e03a3a" stroke-width="3.4" stroke-linecap="round" stroke-linejoin="round"/></svg>
<div class="b" style="left:1516.50px;top:522.50px;width:594.00px;height:85.50px;border:2px solid #c9d0dc;border-radius:9px;box-sizing:border-box;"></div>
<div class="b" style="left:1538.20px;top:548.00px;width:33.50px;height:34.00px;background:#d42424;border-radius:8px;"></div>
<div id="t68" class="t" style="left:1538.20px;top:555.30px;font-size:22px;line-height:22px;color:#fff;width:33.5px;text-align:center;">4</div>
<div id="t69" class="t" style="letter-spacing:0.159px;left:1586.00px;top:553.38px;font-size:25.2px;line-height:25.2px;color:#131a2a;-webkit-text-stroke:1.05px #131a2a;">Failed Runs</div>
<svg class="b" style="left:1737.00px;top:550.00px;width:342.00px;height:40.00px;" viewBox="0 0 342 40"><path d="M0,33.25 L300,33.25 Q308,33.25 316,26 L340,5 L340,33.25 Z" fill="#fbdede"/><path d="M1,33.25 L300,33.25 Q308,33.25 316,26 L340,5" fill="none" stroke="#e03a3a" stroke-width="3.4" stroke-linecap="round" stroke-linejoin="round"/></svg>
<div class="b" style="left:907.80px;top:637.10px;width:593.40px;height:356.80px;border:2px solid #d3d9e3;border-radius:9px;box-sizing:border-box;"></div>
<div id="t70" class="t" style="letter-spacing:0.616px;left:1111.00px;top:657.90px;font-size:24px;line-height:24px;color:#131a2a;-webkit-text-stroke:1.0px #131a2a;">Last 5 Dag Runs</div>
<div class="b" style="left:980.20px;top:716.40px;width:67.40px;height:19.30px;background:#57534e;"></div>
<div id="t71" class="t" style="letter-spacing:0.017px;left:1058.20px;top:715.83px;font-size:20.2px;line-height:20.2px;color:#666666;">Queued Duration</div>
<div class="b" style="left:1230.00px;top:716.40px;width:67.60px;height:19.30px;background:#36781f;"></div>
<div id="t72" class="t" style="letter-spacing:-0.068px;left:1308.00px;top:715.83px;font-size:20.2px;line-height:20.2px;color:#666666;">Run Duration</div>
<div id="t73" class="t" style="right:1943.70px;top:744.28px;font-size:20.5px;line-height:20.5px;color:#666666;">15</div>
<div id="t74" class="t" style="right:1943.70px;top:775.58px;font-size:20.5px;line-height:20.5px;color:#666666;">10</div>
<div id="t75" class="t" style="right:1943.70px;top:807.78px;font-size:20.5px;line-height:20.5px;color:#666666;">5</div>
<div id="t76" class="t" style="right:1943.70px;top:838.78px;font-size:20.5px;line-height:20.5px;color:#666666;">0</div>
<div class="b" style="left:1069.20px;top:752.55px;width:415.00px;height:1.50px;background:#e3e3e3;"></div>
<div class="b" style="left:1069.20px;top:784.25px;width:415.00px;height:1.50px;background:#e3e3e3;"></div>
<div class="b" style="left:1069.20px;top:816.05px;width:415.00px;height:1.50px;background:#e3e3e3;"></div>
<div class="b" style="left:1069.20px;top:847.25px;width:415.00px;height:1.50px;background:#e3e3e3;"></div>
<div class="b" style="left:1081.70px;top:753.30px;width:1.50px;height:94.70px;background:#e3e3e3;"></div>
<div class="b" style="left:1362.60px;top:753.30px;width:1.50px;height:107.70px;background:#e3e3e3;"></div>
<div class="b" style="left:1093.30px;top:774.90px;width:57.90px;height:72.90px;background:#36781f;"></div>
<div class="b" style="left:1093.30px;top:840.80px;width:57.90px;height:7.00px;background:#57534e;"></div>
<div class="b" style="left:1173.90px;top:775.40px;width:57.90px;height:72.40px;background:#36781f;"></div>
<div class="b" style="left:1173.90px;top:843.30px;width:57.90px;height:4.50px;background:#57534e;"></div>
<div class="b" style="left:1254.20px;top:776.90px;width:57.90px;height:70.90px;background:#36781f;"></div>
<div class="b" style="left:1254.20px;top:845.80px;width:57.90px;height:2.00px;background:#57534e;"></div>
<div class="b" style="left:1334.50px;top:784.30px;width:57.90px;height:63.50px;background:#36781f;"></div>
<div class="b" style="left:1334.50px;top:843.30px;width:57.90px;height:4.50px;background:#57534e;"></div>
<div class="b" style="left:1415.00px;top:764.70px;width:57.70px;height:83.10px;background:#d8302a;"></div>
<div class="b" style="left:1082.00px;top:774.20px;width:402.20px;height:2.00px;background:#7a7a7a;"></div>
<div class="b" style="left:1082.00px;top:843.20px;width:402.20px;height:2.00px;background:#7a7a7a;"></div>
<div class="b" style="left:1402.80px;top:762.90px;width:70.90px;height:44.20px;background:rgba(0,0,0,0.8);border-radius:9px;"></div>
<div class="b" style="left:1414.00px;top:794.00px;width:59.70px;height:43.60px;background:rgba(0,0,0,0.8);border-radius:9px;"></div>
<div id="t77" class="t" style="right:1540.30px;top:777.23px;font-size:21.5px;line-height:21.5px;color:#fff;font-weight:700;">11.50</div>
<div id="t78" class="t" style="right:1540.30px;top:807.73px;font-size:21.5px;line-height:21.5px;color:#fff;font-weight:700;">0.68</div>
<div class="t" style="left:976.8px;top:779.7px;width:80px;height:24px;font-size:20.3px;line-height:24px;color:#666666;text-align:center;transform:rotate(-90deg);">Duration</div>
<div class="t" style="left:919.8px;top:867px;width:200px;font-size:20.5px;line-height:22px;color:#666666;text-align:right;transform-origin:100% 0;transform:rotate(-14deg);">2025-09-18 16:50:15</div>
<div class="t" style="left:1080.5px;top:867px;width:200px;font-size:20.5px;line-height:22px;color:#666666;text-align:right;transform-origin:100% 0;transform:rotate(-14deg);">2025-09-18 16:50:21</div>
<div class="t" style="left:1241.5px;top:867px;width:200px;font-size:20.5px;line-height:22px;color:#666666;text-align:right;transform-origin:100% 0;transform:rotate(-14deg);">2025-09-18 16:50:26</div>
<div id="t79" class="t" style="right:1521.80px;top:949.28px;font-size:20.5px;line-height:20.5px;color:#666666;">Run After</div>
<div id="t80" class="t" style="letter-spacing:0.060px;left:908.30px;top:1039.68px;font-size:28.5px;line-height:28.5px;color:#131a2a;-webkit-text-stroke:1.15px #131a2a;">Recent Failed Task Logs</div>
<div class="b" style="left:2844.70px;top:1023.80px;width:110.50px;height:59.20px;border:2px solid #dde2ea;border-radius:9px;box-sizing:border-box;"></div>
<div id="t81" class="t" style="letter-spacing:0.018px;left:2870.40px;top:1042.01px;font-size:24.7px;line-height:24.7px;color:#1b2535;-webkit-text-stroke:0.25px #1b2535;">Wrap</div>
<div class="b" style="left:907.60px;top:1104.40px;width:2047.60px;height:91.60px;border:2px solid #dde2ea;border-radius:9px;box-sizing:border-box;"></div>
<div class="b" style="left:923.00px;top:1127.70px;width:41.90px;height:41.90px;background:#d42424;border-radius:50%;"></div>
<svg class="b" style="left:923.00px;top:1127.70px;width:41.90px;height:41.90px;" viewBox="0 0 41.9 41.9"><path d="M13.1566,13.1566 L28.7434,28.7434 M28.7434,13.1566 L13.1566,28.7434" stroke="#fff" stroke-width="1.7" stroke-linecap="round"/></svg>
<div id="t82" class="t" style="letter-spacing:0.019px;left:972.00px;top:1139.36px;font-size:28.4px;line-height:28.4px;color:#131a2a;">empty_1 2025-09-18 16:50:26</div>
<div id="t83" class="t" style="letter-spacing:0.327px;left:2567.30px;top:1138.43px;font-size:24.2px;line-height:24.2px;color:#1b2535;-webkit-text-stroke:0.25px #1b2535;">Show Logs</div>
<svg class="b" style="left:2735.00px;top:1132.00px;width:40.00px;height:40.00px;" viewBox="0 0 40 40.0"><path d="M25,22.5 A7,7 0 1 1 23.2,13.4" fill="none" stroke="#1e3257" stroke-width="2.3" stroke-linecap="butt"/><path d="M26.1,10.2 L27.5,16.5 L21.2,16.2 Z" fill="#1e3257" stroke="#1e3257" stroke-width="0.8" stroke-linejoin="round"/></svg>
<div id="t84" class="t" style="letter-spacing:0.027px;left:2792.30px;top:1137.58px;font-size:25.2px;line-height:25.2px;color:#2d62e6;">View full logs</div>
<div class="b" style="left:907.60px;top:1218.10px;width:2047.60px;height:89.70px;border:2px solid #dde2ea;border-radius:9px;box-sizing:border-box;"></div>
<div class="b" style="left:923.00px;top:1241.40px;width:41.90px;height:41.90px;background:#d42424;border-radius:50%;"></div>
<svg class="b" style="left:923.00px;top:1241.40px;width:41.90px;height:41.90px;" viewBox="0 0 41.9 41.9"><path d="M13.1566,13.1566 L28.7434,28.7434 M28.7434,13.1566 L13.1566,28.7434" stroke="#fff" stroke-width="1.7" stroke-linecap="round"/></svg>
<div id="t85" class="t" style="letter-spacing:-0.169px;left:972.00px;top:1253.06px;font-size:28.4px;line-height:28.4px;color:#131a2a;">empty_1 2025-09-18 16:50:12</div>
<div id="t86" class="t" style="letter-spacing:0.327px;left:2567.30px;top:1252.13px;font-size:24.2px;line-height:24.2px;color:#1b2535;-webkit-text-stroke:0.25px #1b2535;">Show Logs</div>
<svg class="b" style="left:2735.00px;top:1245.70px;width:40.00px;height:40.00px;" viewBox="0 0 40 40.0"><path d="M25,22.5 A7,7 0 1 1 23.2,13.4" fill="none" stroke="#1e3257" stroke-width="2.3" stroke-linecap="butt"/><path d="M26.1,10.2 L27.5,16.5 L21.2,16.2 Z" fill="#1e3257" stroke="#1e3257" stroke-width="0.8" stroke-linejoin="round"/></svg>
<div id="t87" class="t" style="letter-spacing:0.027px;left:2792.30px;top:1251.28px;font-size:25.2px;line-height:25.2px;color:#2d62e6;">View full logs</div>
<div class="b" style="left:907.60px;top:1331.10px;width:2047.60px;height:89.70px;border:2px solid #dde2ea;border-radius:9px;box-sizing:border-box;"></div>
<div class="b" style="left:923.00px;top:1354.40px;width:41.90px;height:41.90px;background:#d42424;border-radius:50%;"></div>
<svg class="b" style="left:923.00px;top:1354.40px;width:41.90px;height:41.90px;" viewBox="0 0 41.9 41.9"><path d="M13.1566,13.1566 L28.7434,28.7434 M28.7434,13.1566 L13.1566,28.7434" stroke="#fff" stroke-width="1.7" stroke-linecap="round"/></svg>
<div id="t88" class="t" style="letter-spacing:0.019px;left:972.00px;top:1366.06px;font-size:28.4px;line-height:28.4px;color:#131a2a;">empty_1 2025-09-18 16:50:09</div>
<div id="t89" class="t" style="letter-spacing:0.327px;left:2567.30px;top:1365.13px;font-size:24.2px;line-height:24.2px;color:#1b2535;-webkit-text-stroke:0.25px #1b2535;">Show Logs</div>
<svg class="b" style="left:2735.00px;top:1358.70px;width:40.00px;height:40.00px;" viewBox="0 0 40 40.0"><path d="M25,22.5 A7,7 0 1 1 23.2,13.4" fill="none" stroke="#1e3257" stroke-width="2.3" stroke-linecap="butt"/><path d="M26.1,10.2 L27.5,16.5 L21.2,16.2 Z" fill="#1e3257" stroke="#1e3257" stroke-width="0.8" stroke-linejoin="round"/></svg>
<div id="t90" class="t" style="letter-spacing:0.027px;left:2792.30px;top:1364.28px;font-size:25.2px;line-height:25.2px;color:#2d62e6;">View full logs</div>
<div class="b" style="left:907.60px;top:1442.90px;width:2047.60px;height:90.85px;border:2px solid #dde2ea;border-radius:9px;box-sizing:border-box;"></div>
<div class="b" style="left:923.00px;top:1466.20px;width:41.90px;height:41.90px;background:#d42424;border-radius:50%;"></div>
<svg class="b" style="left:923.00px;top:1466.20px;width:41.90px;height:41.90px;" viewBox="0 0 41.9 41.9"><path d="M13.1566,13.1566 L28.7434,28.7434 M28.7434,13.1566 L13.1566,28.7434" stroke="#fff" stroke-width="1.7" stroke-linecap="round"/></svg>
<div id="t91" class="t" style="letter-spacing:0.019px;left:972.00px;top:1477.86px;font-size:28.4px;line-height:28.4px;color:#131a2a;">empty_1 2025-09-18 16:50:04</div>
<div id="t92" class="t" style="letter-spacing:0.327px;left:2567.30px;top:1476.93px;font-size:24.2px;line-height:24.2px;color:#1b2535;-webkit-text-stroke:0.25px #1b2535;">Show Logs</div>
<svg class="b" style="left:2735.00px;top:1470.50px;width:40.00px;height:40.00px;" viewBox="0 0 40 40.0"><path d="M25,22.5 A7,7 0 1 1 23.2,13.4" fill="none" stroke="#1e3257" stroke-width="2.3" stroke-linecap="butt"/><path d="M26.1,10.2 L27.5,16.5 L21.2,16.2 Z" fill="#1e3257" stroke="#1e3257" stroke-width="0.8" stroke-linejoin="round"/></svg>
<div id="t93" class="t" style="letter-spacing:0.027px;left:2792.30px;top:1476.08px;font-size:25.2px;line-height:25.2px;color:#2d62e6;">View full logs</div>
<div style="position:absolute;left:0;top:0;width:3006px;height:1710px;box-sizing:border-box;border:1px solid #b4b4b4;pointer-events:none"></div>
</div></body></html>
